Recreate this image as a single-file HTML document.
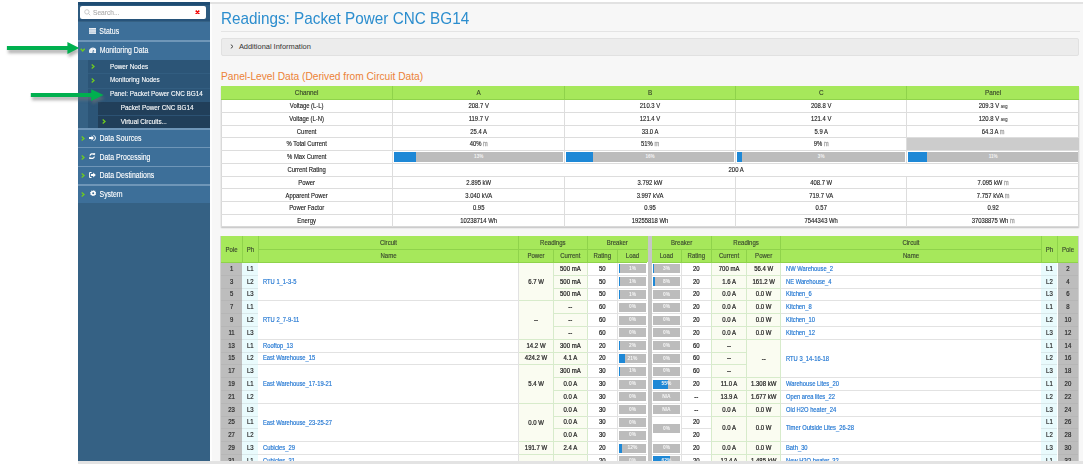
<!DOCTYPE html>
<html><head><meta charset="utf-8"><style>
html,body{margin:0;padding:0;background:#fff;width:1083px;height:464px;overflow:hidden;}
body{position:relative;font-family:"Liberation Sans",sans-serif;}
.a{position:absolute;}
.t{position:absolute;white-space:nowrap;overflow:visible;}
.sm{font-size:0.72em;color:#777;}
.sg{font-size:0.95em;color:#a0a0a0;-webkit-text-stroke:0.25px #a0a0a0;}
</style></head><body>
<div class="a" style="left:78.00px;top:2.00px;width:1005.00px;height:1.60px;background:#e2e2e2;"></div>
<div class="a" style="left:210.00px;top:3.60px;width:873.00px;height:457.40px;background:#f7f7f7;"></div>
<div class="a" style="left:210.00px;top:3.60px;width:2.20px;height:457.40px;background:#fdfdfd;"></div>
<div class="a" style="left:78.00px;top:461.00px;width:1005.00px;height:3.00px;background:#e3e3e3;"></div>
<div class="a" style="left:78.00px;top:2.00px;width:132.00px;height:459.00px;background:#356184;"></div>
<div class="a" style="left:78.00px;top:2.00px;width:132.00px;height:19.00px;background:#2d5a7f;"></div>
<div class="a" style="left:78.00px;top:2.00px;width:132.00px;height:2.50px;background:#1f4c73;"></div>
<div class="a" style="left:78.00px;top:19.20px;width:132.00px;height:2.30px;background:#27537a;"></div>
<div class="a" style="left:80px;top:5.7px;width:126px;height:13.5px;background:#fff;border-radius:2px;"></div>
<svg class="a" style="left:83.5px;top:9.3px" width="7" height="7" viewBox="0 0 7 7"><circle cx="2.9" cy="2.9" r="2.2" fill="none" stroke="#c4c4c4" stroke-width="0.9"/><line x1="4.5" y1="4.5" x2="6.3" y2="6.3" stroke="#c4c4c4" stroke-width="0.9"/></svg>
<div class="t" style="left:93.00px;top:6.00px;width:47.00px;height:13.00px;line-height:13.00px;font-size:6.6px;font-weight:normal;color:#adadad;text-align:left;-webkit-text-stroke:0.12px #adadad;transform:scale(1,1.1);transform-origin:0 50%;">Search...</div>
<svg class="a" style="left:195.2px;top:9.8px" width="5" height="4.6" viewBox="0 0 5 4.6"><path d="M0.7 0.6 L4.3 4.0 M4.3 0.6 L0.7 4.0" stroke="#f20000" stroke-width="1.5"/></svg>
<div class="a" style="left:78.00px;top:21.50px;width:132.00px;height:18.70px;background:#3d6f99;"></div>
<div class="a" style="left:78.00px;top:40.20px;width:132.00px;height:1.70px;background:#6f96b8;"></div>
<svg class="a" style="left:88.8px;top:28.1px" width="7.4" height="5.9" viewBox="0 0 7.4 5.9"><rect x="0" y="0" width="7.4" height="5.9" fill="#eef2f6"/><path d="M0 1.5H7.4M0 2.95H7.4M0 4.4H7.4" stroke="#93afc8" stroke-width="0.55"/><path d="M1.9 0V5.9" stroke="#c8d6e2" stroke-width="0.5"/></svg>
<div class="t" style="left:99.30px;top:22.50px;width:60.70px;height:18.60px;line-height:18.60px;font-size:7.0px;font-weight:normal;color:#fff;text-align:left;-webkit-text-stroke:0.1px #fff;transform:scale(1,1.18);transform-origin:0 50%;">Status</div>
<div class="a" style="left:78.00px;top:41.90px;width:132.00px;height:18.10px;background:#3d6f99;"></div>
<svg class="a" style="left:79.6px;top:48.2px" width="5.4" height="4" viewBox="0 0 5.4 4"><path d="M0.7 0.7 L2.7 2.9 L4.7 0.7" fill="none" stroke="#6fcc1e" stroke-width="1.4"/></svg>
<svg class="a" style="left:88.6px;top:46.7px" width="7.8" height="6.4" viewBox="0 0 7.8 6.4"><path d="M0.5 6.2 A3.9 3.9 0 1 1 7.3 6.2 Z" fill="#f3f6f9"/><path d="M3.9 5.9 L4.4 3.0" stroke="#3d6f99" stroke-width="1.0"/><circle cx="1.9" cy="3.9" r="0.5" fill="#9fb6cc"/><circle cx="5.9" cy="3.9" r="0.5" fill="#9fb6cc"/><circle cx="3.9" cy="1.8" r="0.5" fill="#9fb6cc"/></svg>
<div class="t" style="left:99.70px;top:42.10px;width:70.30px;height:18.30px;line-height:18.30px;font-size:6.9px;font-weight:normal;color:#fff;text-align:left;-webkit-text-stroke:0.1px #fff;transform:scale(1,1.18);transform-origin:0 50%;">Monitoring Data</div>
<div class="a" style="left:88.00px;top:60.00px;width:122.00px;height:67.80px;background:#2c5577;"></div>
<div class="a" style="left:88.00px;top:73.30px;width:122.00px;height:0.80px;background:#325d80;"></div>
<div class="a" style="left:88.00px;top:87.50px;width:122.00px;height:0.80px;background:#325d80;"></div>
<svg class="a" style="left:91.3px;top:64.3px" width="4" height="5" viewBox="0 0 4 5"><path d="M0.7 0.6 L3 2.5 L0.7 4.4" fill="none" stroke="#6fcc1e" stroke-width="1.35"/></svg>
<div class="t" style="left:110.00px;top:59.50px;width:90.00px;height:13.30px;line-height:13.30px;font-size:6.35px;font-weight:normal;color:#fff;text-align:left;-webkit-text-stroke:0.1px #fff;transform:scale(1,1.18);transform-origin:0 50%;">Power Nodes</div>
<svg class="a" style="left:91.3px;top:78.3px" width="4" height="5" viewBox="0 0 4 5"><path d="M0.7 0.6 L3 2.5 L0.7 4.4" fill="none" stroke="#6fcc1e" stroke-width="1.35"/></svg>
<div class="t" style="left:110.00px;top:72.60px;width:90.00px;height:13.40px;line-height:13.40px;font-size:6.35px;font-weight:normal;color:#fff;text-align:left;-webkit-text-stroke:0.1px #fff;transform:scale(1,1.18);transform-origin:0 50%;">Monitoring Nodes</div>
<div class="t" style="left:110.00px;top:86.80px;width:100.00px;height:13.20px;line-height:13.20px;font-size:6.39px;font-weight:normal;color:#fff;text-align:left;-webkit-text-stroke:0.1px #fff;transform:scale(1,1.18);transform-origin:0 50%;">Panel: Packet Power CNC BG14</div>
<div class="a" style="left:98.00px;top:101.50px;width:112.00px;height:26.30px;background:#213f5a;"></div>
<div class="a" style="left:98.00px;top:114.90px;width:112.00px;height:0.90px;background:#2c5273;"></div>
<div class="t" style="left:120.70px;top:101.00px;width:84.30px;height:13.30px;line-height:13.30px;font-size:6.37px;font-weight:normal;color:#fff;text-align:left;-webkit-text-stroke:0.1px #fff;transform:scale(1,1.18);transform-origin:0 50%;">Packet Power CNC BG14</div>
<svg class="a" style="left:102px;top:119.3px" width="4" height="5" viewBox="0 0 4 5"><path d="M0.7 0.6 L3 2.5 L0.7 4.4" fill="none" stroke="#6fcc1e" stroke-width="1.35"/></svg>
<div class="t" style="left:120.70px;top:116.10px;width:84.30px;height:12.70px;line-height:12.70px;font-size:6.37px;font-weight:normal;color:#fff;text-align:left;-webkit-text-stroke:0.1px #fff;transform:scale(1,1.18);transform-origin:0 50%;">Virtual Circuits...</div>
<div class="a" style="left:78.00px;top:127.80px;width:132.00px;height:1.80px;background:#6f96b8;"></div>
<div class="a" style="left:78.00px;top:129.60px;width:132.00px;height:17.50px;background:#3d6f99;"></div>
<div class="a" style="left:78.00px;top:146.90px;width:132.00px;height:1.50px;background:#6f96b8;"></div>
<svg class="a" style="left:81px;top:135.85px" width="4" height="5" viewBox="0 0 4 5"><path d="M0.7 0.6 L3 2.5 L0.7 4.4" fill="none" stroke="#6fcc1e" stroke-width="1.35"/></svg>
<div class="t" style="left:99.50px;top:130.10px;width:100.50px;height:17.50px;line-height:17.50px;font-size:6.95px;font-weight:normal;color:#fff;text-align:left;-webkit-text-stroke:0.1px #fff;transform:scale(1,1.18);transform-origin:0 50%;">Data Sources</div>
<div class="a" style="left:78.00px;top:148.20px;width:132.00px;height:17.70px;background:#3d6f99;"></div>
<div class="a" style="left:78.00px;top:165.70px;width:132.00px;height:1.50px;background:#6f96b8;"></div>
<svg class="a" style="left:81px;top:154.55px" width="4" height="5" viewBox="0 0 4 5"><path d="M0.7 0.6 L3 2.5 L0.7 4.4" fill="none" stroke="#6fcc1e" stroke-width="1.35"/></svg>
<div class="t" style="left:99.50px;top:148.50px;width:100.50px;height:17.70px;line-height:17.70px;font-size:6.95px;font-weight:normal;color:#fff;text-align:left;-webkit-text-stroke:0.1px #fff;transform:scale(1,1.18);transform-origin:0 50%;">Data Processing</div>
<div class="a" style="left:78.00px;top:167.00px;width:132.00px;height:17.40px;background:#3d6f99;"></div>
<div class="a" style="left:78.00px;top:184.20px;width:132.00px;height:1.50px;background:#6f96b8;"></div>
<svg class="a" style="left:81px;top:173.2px" width="4" height="5" viewBox="0 0 4 5"><path d="M0.7 0.6 L3 2.5 L0.7 4.4" fill="none" stroke="#6fcc1e" stroke-width="1.35"/></svg>
<div class="t" style="left:99.50px;top:166.50px;width:100.50px;height:17.40px;line-height:17.40px;font-size:6.95px;font-weight:normal;color:#fff;text-align:left;-webkit-text-stroke:0.1px #fff;transform:scale(1,1.18);transform-origin:0 50%;">Data Destinations</div>
<div class="a" style="left:78.00px;top:185.50px;width:132.00px;height:17.40px;background:#3d6f99;"></div>
<svg class="a" style="left:81px;top:191.7px" width="4" height="5" viewBox="0 0 4 5"><path d="M0.7 0.6 L3 2.5 L0.7 4.4" fill="none" stroke="#6fcc1e" stroke-width="1.35"/></svg>
<div class="t" style="left:99.50px;top:185.80px;width:100.50px;height:17.40px;line-height:17.40px;font-size:6.95px;font-weight:normal;color:#fff;text-align:left;-webkit-text-stroke:0.1px #fff;transform:scale(1,1.18);transform-origin:0 50%;">System</div>
<svg class="a" style="left:88.9px;top:134.8px" width="7" height="6" viewBox="0 0 7 6"><path d="M0 2.1H2.6V0.5L4.9 3L2.6 5.5V3.9H0Z" fill="#fff"/><path d="M4.3 0.5 Q6.5 0.7 6.5 3 Q6.5 5.3 4.3 5.5" fill="none" stroke="#fff" stroke-width="0.9"/></svg>
<svg class="a" style="left:89.2px;top:153.2px" width="6.4" height="6.2" viewBox="0 0 6.4 6.2"><path d="M1.0 2.7 A2.3 2.3 0 0 1 5.0 1.6" fill="none" stroke="#fff" stroke-width="1.3"/><path d="M5.4 3.5 A2.3 2.3 0 0 1 1.4 4.6" fill="none" stroke="#fff" stroke-width="1.3"/><path d="M3.9 0.1 L6.2 0.2 L6.0 2.6Z M2.5 6.1 L0.2 6.0 L0.4 3.6Z" fill="#fff"/></svg>
<svg class="a" style="left:89.0px;top:172.2px" width="7" height="6" viewBox="0 0 7 6"><path d="M2.6 0.5H0.6V5.5H2.6" fill="none" stroke="#fff" stroke-width="1.0"/><path d="M2.0 2.1H4.2V0.5L6.8 3L4.2 5.5V3.9H2.0Z" fill="#fff"/></svg>
<svg class="a" style="left:89.9px;top:190.3px" width="6.4" height="6.4" viewBox="0 0 6.4 6.4"><path d="M3.2 0 L3.9 0.9 L5.2 0.6 L5.3 1.9 L6.4 2.5 L5.7 3.6 L6.1 4.8 L4.8 5.1 L4.1 6.2 L3.2 5.5 L2.0 6.1 L1.5 4.9 L0.2 4.6 L0.6 3.4 L0 2.3 L1.2 1.8 L1.3 0.5 L2.6 0.9Z" fill="#fff"/><circle cx="3.2" cy="3.2" r="1.0" fill="#3d6f99"/></svg>
<div class="t" style="left:221.00px;top:7.70px;width:379.00px;height:20.00px;line-height:20.00px;font-size:16.4px;font-weight:normal;color:#2b8dce;text-align:left;transform:scale(0.933,1);transform-origin:0 50%;">Readings: Packet Power CNC BG14</div>
<div class="a" style="left:220.50px;top:31.30px;width:859.00px;height:1.10px;background:#e4e4e4;"></div>
<div class="a" style="left:220.5px;top:37.8px;width:858.5px;height:17.8px;box-sizing:border-box;background:#ececec;border-radius:2px;border:0.8px solid #e1e1e1"></div>
<svg class="a" style="left:230.3px;top:43.5px" width="4" height="5" viewBox="0 0 4 5"><path d="M0.8 0.6 L3 2.5 L0.8 4.4" fill="none" stroke="#444" stroke-width="1"/></svg>
<div class="t" style="left:238.90px;top:38.00px;width:161.10px;height:17.60px;line-height:17.60px;font-size:7.45px;font-weight:normal;color:#333;text-align:left;">Additional Information</div>
<div class="t" style="left:221.00px;top:69.00px;width:379.00px;height:16.00px;line-height:16.00px;font-size:10.2px;font-weight:normal;color:#ec8236;text-align:left;">Panel-Level Data (Derived from Circuit Data)</div>
<div class="a" style="left:220.50px;top:86.20px;width:858.90px;height:140.50px;background:#fff;box-sizing:border-box;border:0.8px solid #d9d9d9;box-shadow:0 0.6px 1.2px rgba(0,0,0,0.22)"></div>
<div class="a" style="left:220.50px;top:86.20px;width:858.90px;height:13.30px;background:#a6e85b;"></div>
<div class="a" style="left:220.50px;top:98.50px;width:858.90px;height:1.00px;background:#8fd34b;"></div>
<div class="a" style="left:392.40px;top:86.20px;width:1.00px;height:13.30px;background:#8fd34b;"></div>
<div class="a" style="left:564.00px;top:86.20px;width:1.00px;height:13.30px;background:#8fd34b;"></div>
<div class="a" style="left:735.00px;top:86.20px;width:1.00px;height:13.30px;background:#8fd34b;"></div>
<div class="a" style="left:906.40px;top:86.20px;width:1.00px;height:13.30px;background:#8fd34b;"></div>
<div class="t" style="left:220.50px;top:85.80px;width:172.40px;height:13.30px;line-height:13.30px;font-size:6.36px;font-weight:normal;color:#3a4a2a;text-align:center;-webkit-text-stroke:0.15px #3a4a2a;transform:scale(1,1.18);transform-origin:50% 50%;">Channel</div>
<div class="t" style="left:392.90px;top:85.80px;width:171.60px;height:13.30px;line-height:13.30px;font-size:6.36px;font-weight:normal;color:#3a4a2a;text-align:center;-webkit-text-stroke:0.15px #3a4a2a;transform:scale(1,1.18);transform-origin:50% 50%;">A</div>
<div class="t" style="left:564.50px;top:85.80px;width:171.00px;height:13.30px;line-height:13.30px;font-size:6.36px;font-weight:normal;color:#3a4a2a;text-align:center;-webkit-text-stroke:0.15px #3a4a2a;transform:scale(1,1.18);transform-origin:50% 50%;">B</div>
<div class="t" style="left:735.50px;top:85.80px;width:171.40px;height:13.30px;line-height:13.30px;font-size:6.36px;font-weight:normal;color:#3a4a2a;text-align:center;-webkit-text-stroke:0.15px #3a4a2a;transform:scale(1,1.18);transform-origin:50% 50%;">C</div>
<div class="t" style="left:906.90px;top:85.80px;width:172.50px;height:13.30px;line-height:13.30px;font-size:6.36px;font-weight:normal;color:#3a4a2a;text-align:center;-webkit-text-stroke:0.15px #3a4a2a;transform:scale(1,1.18);transform-origin:50% 50%;">Panel</div>
<div class="a" style="left:392.40px;top:99.50px;width:1.00px;height:12.76px;background:#dddddd;"></div>
<div class="a" style="left:564.00px;top:99.50px;width:1.00px;height:12.76px;background:#dddddd;"></div>
<div class="a" style="left:735.00px;top:99.50px;width:1.00px;height:12.76px;background:#dddddd;"></div>
<div class="a" style="left:906.40px;top:99.50px;width:1.00px;height:12.76px;background:#dddddd;"></div>
<div class="t" style="left:220.50px;top:100.20px;width:172.40px;height:12.76px;line-height:12.76px;font-size:5.9px;font-weight:normal;color:#222;text-align:center;-webkit-text-stroke:0.12px #222;transform:scale(1,1.18);transform-origin:50% 50%;">Voltage (L-L)</div>
<div class="t" style="left:392.90px;top:100.20px;width:171.60px;height:12.76px;line-height:12.76px;font-size:5.9px;font-weight:normal;color:#222;text-align:center;-webkit-text-stroke:0.12px #222;transform:scale(1,1.18);transform-origin:50% 50%;">208.7 V</div>
<div class="t" style="left:564.50px;top:100.20px;width:171.00px;height:12.76px;line-height:12.76px;font-size:5.9px;font-weight:normal;color:#222;text-align:center;-webkit-text-stroke:0.12px #222;transform:scale(1,1.18);transform-origin:50% 50%;">210.3 V</div>
<div class="t" style="left:735.50px;top:100.20px;width:171.40px;height:12.76px;line-height:12.76px;font-size:5.9px;font-weight:normal;color:#222;text-align:center;-webkit-text-stroke:0.12px #222;transform:scale(1,1.18);transform-origin:50% 50%;">208.8 V</div>
<div class="t" style="left:906.90px;top:100.20px;width:172.50px;height:12.76px;line-height:12.76px;font-size:5.9px;font-weight:normal;color:#222;text-align:center;-webkit-text-stroke:0.12px #222;transform:scale(1,1.18);transform-origin:50% 50%;">209.3 V <span class="sm">avg</span></div>
<div class="a" style="left:220.50px;top:111.76px;width:858.90px;height:1.10px;background:#dddddd;"></div>
<div class="a" style="left:392.40px;top:112.26px;width:1.00px;height:12.76px;background:#dddddd;"></div>
<div class="a" style="left:564.00px;top:112.26px;width:1.00px;height:12.76px;background:#dddddd;"></div>
<div class="a" style="left:735.00px;top:112.26px;width:1.00px;height:12.76px;background:#dddddd;"></div>
<div class="a" style="left:906.40px;top:112.26px;width:1.00px;height:12.76px;background:#dddddd;"></div>
<div class="t" style="left:220.50px;top:112.96px;width:172.40px;height:12.76px;line-height:12.76px;font-size:5.9px;font-weight:normal;color:#222;text-align:center;-webkit-text-stroke:0.12px #222;transform:scale(1,1.18);transform-origin:50% 50%;">Voltage (L-N)</div>
<div class="t" style="left:392.90px;top:112.96px;width:171.60px;height:12.76px;line-height:12.76px;font-size:5.9px;font-weight:normal;color:#222;text-align:center;-webkit-text-stroke:0.12px #222;transform:scale(1,1.18);transform-origin:50% 50%;">119.7 V</div>
<div class="t" style="left:564.50px;top:112.96px;width:171.00px;height:12.76px;line-height:12.76px;font-size:5.9px;font-weight:normal;color:#222;text-align:center;-webkit-text-stroke:0.12px #222;transform:scale(1,1.18);transform-origin:50% 50%;">121.4 V</div>
<div class="t" style="left:735.50px;top:112.96px;width:171.40px;height:12.76px;line-height:12.76px;font-size:5.9px;font-weight:normal;color:#222;text-align:center;-webkit-text-stroke:0.12px #222;transform:scale(1,1.18);transform-origin:50% 50%;">121.4 V</div>
<div class="t" style="left:906.90px;top:112.96px;width:172.50px;height:12.76px;line-height:12.76px;font-size:5.9px;font-weight:normal;color:#222;text-align:center;-webkit-text-stroke:0.12px #222;transform:scale(1,1.18);transform-origin:50% 50%;">120.8 V <span class="sm">avg</span></div>
<div class="a" style="left:220.50px;top:124.52px;width:858.90px;height:1.10px;background:#dddddd;"></div>
<div class="a" style="left:392.40px;top:125.02px;width:1.00px;height:12.76px;background:#dddddd;"></div>
<div class="a" style="left:564.00px;top:125.02px;width:1.00px;height:12.76px;background:#dddddd;"></div>
<div class="a" style="left:735.00px;top:125.02px;width:1.00px;height:12.76px;background:#dddddd;"></div>
<div class="a" style="left:906.40px;top:125.02px;width:1.00px;height:12.76px;background:#dddddd;"></div>
<div class="t" style="left:220.50px;top:125.72px;width:172.40px;height:12.76px;line-height:12.76px;font-size:5.9px;font-weight:normal;color:#222;text-align:center;-webkit-text-stroke:0.12px #222;transform:scale(1,1.18);transform-origin:50% 50%;">Current</div>
<div class="t" style="left:392.90px;top:125.72px;width:171.60px;height:12.76px;line-height:12.76px;font-size:5.9px;font-weight:normal;color:#222;text-align:center;-webkit-text-stroke:0.12px #222;transform:scale(1,1.18);transform-origin:50% 50%;">25.4 A</div>
<div class="t" style="left:564.50px;top:125.72px;width:171.00px;height:12.76px;line-height:12.76px;font-size:5.9px;font-weight:normal;color:#222;text-align:center;-webkit-text-stroke:0.12px #222;transform:scale(1,1.18);transform-origin:50% 50%;">33.0 A</div>
<div class="t" style="left:735.50px;top:125.72px;width:171.40px;height:12.76px;line-height:12.76px;font-size:5.9px;font-weight:normal;color:#222;text-align:center;-webkit-text-stroke:0.12px #222;transform:scale(1,1.18);transform-origin:50% 50%;">5.9 A</div>
<div class="t" style="left:906.90px;top:125.72px;width:172.50px;height:12.76px;line-height:12.76px;font-size:5.9px;font-weight:normal;color:#222;text-align:center;-webkit-text-stroke:0.12px #222;transform:scale(1,1.18);transform-origin:50% 50%;">64.3 A <span class="sg">m</span></div>
<div class="a" style="left:220.50px;top:137.28px;width:858.90px;height:1.10px;background:#dddddd;"></div>
<div class="a" style="left:392.40px;top:137.78px;width:1.00px;height:12.76px;background:#dddddd;"></div>
<div class="a" style="left:564.00px;top:137.78px;width:1.00px;height:12.76px;background:#dddddd;"></div>
<div class="a" style="left:735.00px;top:137.78px;width:1.00px;height:12.76px;background:#dddddd;"></div>
<div class="a" style="left:906.40px;top:137.78px;width:1.00px;height:12.76px;background:#dddddd;"></div>
<div class="t" style="left:220.50px;top:138.48px;width:172.40px;height:12.76px;line-height:12.76px;font-size:5.9px;font-weight:normal;color:#222;text-align:center;-webkit-text-stroke:0.12px #222;transform:scale(1,1.18);transform-origin:50% 50%;">% Total Current</div>
<div class="t" style="left:392.90px;top:138.48px;width:171.60px;height:12.76px;line-height:12.76px;font-size:5.9px;font-weight:normal;color:#222;text-align:center;-webkit-text-stroke:0.12px #222;transform:scale(1,1.18);transform-origin:50% 50%;">40% <span class="sg">m</span></div>
<div class="t" style="left:564.50px;top:138.48px;width:171.00px;height:12.76px;line-height:12.76px;font-size:5.9px;font-weight:normal;color:#222;text-align:center;-webkit-text-stroke:0.12px #222;transform:scale(1,1.18);transform-origin:50% 50%;">51% <span class="sg">m</span></div>
<div class="t" style="left:735.50px;top:138.48px;width:171.40px;height:12.76px;line-height:12.76px;font-size:5.9px;font-weight:normal;color:#222;text-align:center;-webkit-text-stroke:0.12px #222;transform:scale(1,1.18);transform-origin:50% 50%;">9% <span class="sg">m</span></div>
<div class="a" style="left:907.40px;top:138.38px;width:171.50px;height:11.66px;background:#cccccc;"></div>
<div class="a" style="left:220.50px;top:150.04px;width:858.90px;height:1.10px;background:#dddddd;"></div>
<div class="a" style="left:392.40px;top:150.54px;width:1.00px;height:12.76px;background:#dddddd;"></div>
<div class="a" style="left:564.00px;top:150.54px;width:1.00px;height:12.76px;background:#dddddd;"></div>
<div class="a" style="left:735.00px;top:150.54px;width:1.00px;height:12.76px;background:#dddddd;"></div>
<div class="a" style="left:906.40px;top:150.54px;width:1.00px;height:12.76px;background:#dddddd;"></div>
<div class="t" style="left:220.50px;top:151.24px;width:172.40px;height:12.76px;line-height:12.76px;font-size:5.9px;font-weight:normal;color:#222;text-align:center;-webkit-text-stroke:0.12px #222;transform:scale(1,1.18);transform-origin:50% 50%;">% Max Current</div>
<div class="a" style="left:394.30px;top:152.04px;width:168.80px;height:9.56px;background:#bcbcbc;"></div>
<div class="a" style="left:394.30px;top:152.04px;width:21.94px;height:9.56px;background:#1e88d6;"></div>
<div class="t" style="left:394.30px;top:152.04px;width:168.80px;height:9.56px;line-height:9.56px;font-size:4.6px;font-weight:normal;color:#f4f4f4;text-align:center;font-weight:bold;">13%</div>
<div class="a" style="left:565.90px;top:152.04px;width:168.20px;height:9.56px;background:#bcbcbc;"></div>
<div class="a" style="left:565.90px;top:152.04px;width:26.91px;height:9.56px;background:#1e88d6;"></div>
<div class="t" style="left:565.90px;top:152.04px;width:168.20px;height:9.56px;line-height:9.56px;font-size:4.6px;font-weight:normal;color:#f4f4f4;text-align:center;font-weight:bold;">16%</div>
<div class="a" style="left:736.90px;top:152.04px;width:168.60px;height:9.56px;background:#bcbcbc;"></div>
<div class="a" style="left:736.90px;top:152.04px;width:5.06px;height:9.56px;background:#1e88d6;"></div>
<div class="t" style="left:736.90px;top:152.04px;width:168.60px;height:9.56px;line-height:9.56px;font-size:4.6px;font-weight:normal;color:#f4f4f4;text-align:center;font-weight:bold;">3%</div>
<div class="a" style="left:908.30px;top:152.04px;width:169.70px;height:9.56px;background:#bcbcbc;"></div>
<div class="a" style="left:908.30px;top:152.04px;width:18.67px;height:9.56px;background:#1e88d6;"></div>
<div class="t" style="left:908.30px;top:152.04px;width:169.70px;height:9.56px;line-height:9.56px;font-size:4.6px;font-weight:normal;color:#f4f4f4;text-align:center;font-weight:bold;">11%</div>
<div class="a" style="left:220.50px;top:162.80px;width:858.90px;height:1.10px;background:#dddddd;"></div>
<div class="a" style="left:392.40px;top:163.30px;width:1.00px;height:12.76px;background:#dddddd;"></div>
<div class="t" style="left:220.50px;top:164.00px;width:172.40px;height:12.76px;line-height:12.76px;font-size:5.9px;font-weight:normal;color:#222;text-align:center;-webkit-text-stroke:0.12px #222;transform:scale(1,1.18);transform-origin:50% 50%;">Current Rating</div>
<div class="t" style="left:392.90px;top:164.00px;width:686.50px;height:12.76px;line-height:12.76px;font-size:5.9px;font-weight:normal;color:#222;text-align:center;-webkit-text-stroke:0.12px #222;transform:scale(1,1.18);transform-origin:50% 50%;">200 A</div>
<div class="a" style="left:220.50px;top:175.56px;width:858.90px;height:1.10px;background:#dddddd;"></div>
<div class="a" style="left:392.40px;top:176.06px;width:1.00px;height:12.76px;background:#dddddd;"></div>
<div class="a" style="left:564.00px;top:176.06px;width:1.00px;height:12.76px;background:#dddddd;"></div>
<div class="a" style="left:735.00px;top:176.06px;width:1.00px;height:12.76px;background:#dddddd;"></div>
<div class="a" style="left:906.40px;top:176.06px;width:1.00px;height:12.76px;background:#dddddd;"></div>
<div class="t" style="left:220.50px;top:176.76px;width:172.40px;height:12.76px;line-height:12.76px;font-size:5.9px;font-weight:normal;color:#222;text-align:center;-webkit-text-stroke:0.12px #222;transform:scale(1,1.18);transform-origin:50% 50%;">Power</div>
<div class="t" style="left:392.90px;top:176.76px;width:171.60px;height:12.76px;line-height:12.76px;font-size:5.9px;font-weight:normal;color:#222;text-align:center;-webkit-text-stroke:0.12px #222;transform:scale(1,1.18);transform-origin:50% 50%;">2.895 kW</div>
<div class="t" style="left:564.50px;top:176.76px;width:171.00px;height:12.76px;line-height:12.76px;font-size:5.9px;font-weight:normal;color:#222;text-align:center;-webkit-text-stroke:0.12px #222;transform:scale(1,1.18);transform-origin:50% 50%;">3.792 kW</div>
<div class="t" style="left:735.50px;top:176.76px;width:171.40px;height:12.76px;line-height:12.76px;font-size:5.9px;font-weight:normal;color:#222;text-align:center;-webkit-text-stroke:0.12px #222;transform:scale(1,1.18);transform-origin:50% 50%;">408.7 W</div>
<div class="t" style="left:906.90px;top:176.76px;width:172.50px;height:12.76px;line-height:12.76px;font-size:5.9px;font-weight:normal;color:#222;text-align:center;-webkit-text-stroke:0.12px #222;transform:scale(1,1.18);transform-origin:50% 50%;">7.095 kW <span class="sg">m</span></div>
<div class="a" style="left:220.50px;top:188.32px;width:858.90px;height:1.10px;background:#dddddd;"></div>
<div class="a" style="left:392.40px;top:188.82px;width:1.00px;height:12.76px;background:#dddddd;"></div>
<div class="a" style="left:564.00px;top:188.82px;width:1.00px;height:12.76px;background:#dddddd;"></div>
<div class="a" style="left:735.00px;top:188.82px;width:1.00px;height:12.76px;background:#dddddd;"></div>
<div class="a" style="left:906.40px;top:188.82px;width:1.00px;height:12.76px;background:#dddddd;"></div>
<div class="t" style="left:220.50px;top:189.52px;width:172.40px;height:12.76px;line-height:12.76px;font-size:5.9px;font-weight:normal;color:#222;text-align:center;-webkit-text-stroke:0.12px #222;transform:scale(1,1.18);transform-origin:50% 50%;">Apparent Power</div>
<div class="t" style="left:392.90px;top:189.52px;width:171.60px;height:12.76px;line-height:12.76px;font-size:5.9px;font-weight:normal;color:#222;text-align:center;-webkit-text-stroke:0.12px #222;transform:scale(1,1.18);transform-origin:50% 50%;">3.040 kVA</div>
<div class="t" style="left:564.50px;top:189.52px;width:171.00px;height:12.76px;line-height:12.76px;font-size:5.9px;font-weight:normal;color:#222;text-align:center;-webkit-text-stroke:0.12px #222;transform:scale(1,1.18);transform-origin:50% 50%;">3.997 kVA</div>
<div class="t" style="left:735.50px;top:189.52px;width:171.40px;height:12.76px;line-height:12.76px;font-size:5.9px;font-weight:normal;color:#222;text-align:center;-webkit-text-stroke:0.12px #222;transform:scale(1,1.18);transform-origin:50% 50%;">719.7 VA</div>
<div class="t" style="left:906.90px;top:189.52px;width:172.50px;height:12.76px;line-height:12.76px;font-size:5.9px;font-weight:normal;color:#222;text-align:center;-webkit-text-stroke:0.12px #222;transform:scale(1,1.18);transform-origin:50% 50%;">7.757 kVA <span class="sg">m</span></div>
<div class="a" style="left:220.50px;top:201.08px;width:858.90px;height:1.10px;background:#dddddd;"></div>
<div class="a" style="left:392.40px;top:201.58px;width:1.00px;height:12.76px;background:#dddddd;"></div>
<div class="a" style="left:564.00px;top:201.58px;width:1.00px;height:12.76px;background:#dddddd;"></div>
<div class="a" style="left:735.00px;top:201.58px;width:1.00px;height:12.76px;background:#dddddd;"></div>
<div class="a" style="left:906.40px;top:201.58px;width:1.00px;height:12.76px;background:#dddddd;"></div>
<div class="t" style="left:220.50px;top:202.28px;width:172.40px;height:12.76px;line-height:12.76px;font-size:5.9px;font-weight:normal;color:#222;text-align:center;-webkit-text-stroke:0.12px #222;transform:scale(1,1.18);transform-origin:50% 50%;">Power Factor</div>
<div class="t" style="left:392.90px;top:202.28px;width:171.60px;height:12.76px;line-height:12.76px;font-size:5.9px;font-weight:normal;color:#222;text-align:center;-webkit-text-stroke:0.12px #222;transform:scale(1,1.18);transform-origin:50% 50%;">0.95</div>
<div class="t" style="left:564.50px;top:202.28px;width:171.00px;height:12.76px;line-height:12.76px;font-size:5.9px;font-weight:normal;color:#222;text-align:center;-webkit-text-stroke:0.12px #222;transform:scale(1,1.18);transform-origin:50% 50%;">0.95</div>
<div class="t" style="left:735.50px;top:202.28px;width:171.40px;height:12.76px;line-height:12.76px;font-size:5.9px;font-weight:normal;color:#222;text-align:center;-webkit-text-stroke:0.12px #222;transform:scale(1,1.18);transform-origin:50% 50%;">0.57</div>
<div class="t" style="left:906.90px;top:202.28px;width:172.50px;height:12.76px;line-height:12.76px;font-size:5.9px;font-weight:normal;color:#222;text-align:center;-webkit-text-stroke:0.12px #222;transform:scale(1,1.18);transform-origin:50% 50%;">0.92</div>
<div class="a" style="left:220.50px;top:213.84px;width:858.90px;height:1.10px;background:#dddddd;"></div>
<div class="a" style="left:392.40px;top:214.34px;width:1.00px;height:12.76px;background:#dddddd;"></div>
<div class="a" style="left:564.00px;top:214.34px;width:1.00px;height:12.76px;background:#dddddd;"></div>
<div class="a" style="left:735.00px;top:214.34px;width:1.00px;height:12.76px;background:#dddddd;"></div>
<div class="a" style="left:906.40px;top:214.34px;width:1.00px;height:12.76px;background:#dddddd;"></div>
<div class="t" style="left:220.50px;top:215.04px;width:172.40px;height:12.76px;line-height:12.76px;font-size:5.9px;font-weight:normal;color:#222;text-align:center;-webkit-text-stroke:0.12px #222;transform:scale(1,1.18);transform-origin:50% 50%;">Energy</div>
<div class="t" style="left:392.90px;top:215.04px;width:171.60px;height:12.76px;line-height:12.76px;font-size:5.9px;font-weight:normal;color:#222;text-align:center;-webkit-text-stroke:0.12px #222;transform:scale(1,1.18);transform-origin:50% 50%;">10238714 Wh</div>
<div class="t" style="left:564.50px;top:215.04px;width:171.00px;height:12.76px;line-height:12.76px;font-size:5.9px;font-weight:normal;color:#222;text-align:center;-webkit-text-stroke:0.12px #222;transform:scale(1,1.18);transform-origin:50% 50%;">19255818 Wh</div>
<div class="t" style="left:735.50px;top:215.04px;width:171.40px;height:12.76px;line-height:12.76px;font-size:5.9px;font-weight:normal;color:#222;text-align:center;-webkit-text-stroke:0.12px #222;transform:scale(1,1.18);transform-origin:50% 50%;">7544343 Wh</div>
<div class="t" style="left:906.90px;top:215.04px;width:172.50px;height:12.76px;line-height:12.76px;font-size:5.9px;font-weight:normal;color:#222;text-align:center;-webkit-text-stroke:0.12px #222;transform:scale(1,1.18);transform-origin:50% 50%;">37038875 Wh <span class="sg">m</span></div>
<div class="a" style="left:220.80px;top:236.10px;width:857.60px;height:224.90px;background:#ffffff;"></div>
<div class="a" style="left:220.80px;top:236.10px;width:857.60px;height:26.30px;background:#a6e85b;"></div>
<div class="a" style="left:647.50px;top:236.10px;width:4.20px;height:224.90px;background:#c6c6c6;"></div>
<div class="a" style="left:258.40px;top:248.70px;width:389.10px;height:1.00px;background:#8fd34b;"></div>
<div class="a" style="left:651.70px;top:248.70px;width:389.60px;height:1.00px;background:#8fd34b;"></div>
<div class="a" style="left:241.80px;top:236.10px;width:1.00px;height:26.30px;background:#8fd34b;"></div>
<div class="a" style="left:257.90px;top:236.10px;width:1.00px;height:26.30px;background:#8fd34b;"></div>
<div class="a" style="left:518.10px;top:236.10px;width:1.00px;height:26.30px;background:#8fd34b;"></div>
<div class="a" style="left:586.60px;top:236.10px;width:1.00px;height:26.30px;background:#8fd34b;"></div>
<div class="a" style="left:553.00px;top:249.20px;width:1.00px;height:13.20px;background:#8fd34b;"></div>
<div class="a" style="left:617.00px;top:249.20px;width:1.00px;height:13.20px;background:#8fd34b;"></div>
<div class="a" style="left:711.00px;top:236.10px;width:1.00px;height:26.30px;background:#8fd34b;"></div>
<div class="a" style="left:780.20px;top:236.10px;width:1.00px;height:26.30px;background:#8fd34b;"></div>
<div class="a" style="left:1040.80px;top:236.10px;width:1.00px;height:26.30px;background:#8fd34b;"></div>
<div class="a" style="left:1057.00px;top:236.10px;width:1.00px;height:26.30px;background:#8fd34b;"></div>
<div class="a" style="left:680.70px;top:249.20px;width:1.00px;height:13.20px;background:#8fd34b;"></div>
<div class="a" style="left:746.20px;top:249.20px;width:1.00px;height:13.20px;background:#8fd34b;"></div>
<div class="t" style="left:220.80px;top:236.90px;width:21.50px;height:26.30px;line-height:26.30px;font-size:6.05px;font-weight:normal;color:#3b4a2f;text-align:center;-webkit-text-stroke:0.15px #3b4a2f;transform:scale(1,1.18);transform-origin:50% 50%;">Pole</div>
<div class="t" style="left:242.30px;top:236.90px;width:16.10px;height:26.30px;line-height:26.30px;font-size:6.05px;font-weight:normal;color:#3b4a2f;text-align:center;-webkit-text-stroke:0.15px #3b4a2f;transform:scale(1,1.18);transform-origin:50% 50%;">Ph</div>
<div class="t" style="left:258.40px;top:236.90px;width:260.20px;height:13.10px;line-height:13.10px;font-size:6.05px;font-weight:normal;color:#3b4a2f;text-align:center;-webkit-text-stroke:0.15px #3b4a2f;transform:scale(1,1.18);transform-origin:50% 50%;">Circuit</div>
<div class="t" style="left:518.60px;top:236.90px;width:68.50px;height:13.10px;line-height:13.10px;font-size:6.05px;font-weight:normal;color:#3b4a2f;text-align:center;-webkit-text-stroke:0.15px #3b4a2f;transform:scale(1,1.18);transform-origin:50% 50%;">Readings</div>
<div class="t" style="left:587.10px;top:236.90px;width:60.40px;height:13.10px;line-height:13.10px;font-size:6.05px;font-weight:normal;color:#3b4a2f;text-align:center;-webkit-text-stroke:0.15px #3b4a2f;transform:scale(1,1.18);transform-origin:50% 50%;">Breaker</div>
<div class="t" style="left:258.40px;top:250.00px;width:260.20px;height:13.20px;line-height:13.20px;font-size:6.05px;font-weight:normal;color:#3b4a2f;text-align:center;-webkit-text-stroke:0.15px #3b4a2f;transform:scale(1,1.18);transform-origin:50% 50%;">Name</div>
<div class="t" style="left:518.60px;top:250.00px;width:34.90px;height:13.20px;line-height:13.20px;font-size:6.05px;font-weight:normal;color:#3b4a2f;text-align:center;-webkit-text-stroke:0.15px #3b4a2f;transform:scale(1,1.18);transform-origin:50% 50%;">Power</div>
<div class="t" style="left:553.50px;top:250.00px;width:33.60px;height:13.20px;line-height:13.20px;font-size:6.05px;font-weight:normal;color:#3b4a2f;text-align:center;-webkit-text-stroke:0.15px #3b4a2f;transform:scale(1,1.18);transform-origin:50% 50%;">Current</div>
<div class="t" style="left:587.10px;top:250.00px;width:30.40px;height:13.20px;line-height:13.20px;font-size:6.05px;font-weight:normal;color:#3b4a2f;text-align:center;-webkit-text-stroke:0.15px #3b4a2f;transform:scale(1,1.18);transform-origin:50% 50%;">Rating</div>
<div class="t" style="left:617.50px;top:250.00px;width:30.00px;height:13.20px;line-height:13.20px;font-size:6.05px;font-weight:normal;color:#3b4a2f;text-align:center;-webkit-text-stroke:0.15px #3b4a2f;transform:scale(1,1.18);transform-origin:50% 50%;">Load</div>
<div class="t" style="left:651.70px;top:236.90px;width:59.80px;height:13.10px;line-height:13.10px;font-size:6.05px;font-weight:normal;color:#3b4a2f;text-align:center;-webkit-text-stroke:0.15px #3b4a2f;transform:scale(1,1.18);transform-origin:50% 50%;">Breaker</div>
<div class="t" style="left:711.50px;top:236.90px;width:69.20px;height:13.10px;line-height:13.10px;font-size:6.05px;font-weight:normal;color:#3b4a2f;text-align:center;-webkit-text-stroke:0.15px #3b4a2f;transform:scale(1,1.18);transform-origin:50% 50%;">Readings</div>
<div class="t" style="left:780.70px;top:236.90px;width:260.60px;height:13.10px;line-height:13.10px;font-size:6.05px;font-weight:normal;color:#3b4a2f;text-align:center;-webkit-text-stroke:0.15px #3b4a2f;transform:scale(1,1.18);transform-origin:50% 50%;">Circuit</div>
<div class="t" style="left:651.70px;top:250.00px;width:29.50px;height:13.20px;line-height:13.20px;font-size:6.05px;font-weight:normal;color:#3b4a2f;text-align:center;-webkit-text-stroke:0.15px #3b4a2f;transform:scale(1,1.18);transform-origin:50% 50%;">Load</div>
<div class="t" style="left:681.20px;top:250.00px;width:30.30px;height:13.20px;line-height:13.20px;font-size:6.05px;font-weight:normal;color:#3b4a2f;text-align:center;-webkit-text-stroke:0.15px #3b4a2f;transform:scale(1,1.18);transform-origin:50% 50%;">Rating</div>
<div class="t" style="left:711.50px;top:250.00px;width:35.20px;height:13.20px;line-height:13.20px;font-size:6.05px;font-weight:normal;color:#3b4a2f;text-align:center;-webkit-text-stroke:0.15px #3b4a2f;transform:scale(1,1.18);transform-origin:50% 50%;">Current</div>
<div class="t" style="left:746.70px;top:250.00px;width:34.00px;height:13.20px;line-height:13.20px;font-size:6.05px;font-weight:normal;color:#3b4a2f;text-align:center;-webkit-text-stroke:0.15px #3b4a2f;transform:scale(1,1.18);transform-origin:50% 50%;">Power</div>
<div class="t" style="left:780.70px;top:250.00px;width:260.60px;height:13.20px;line-height:13.20px;font-size:6.05px;font-weight:normal;color:#3b4a2f;text-align:center;-webkit-text-stroke:0.15px #3b4a2f;transform:scale(1,1.18);transform-origin:50% 50%;">Name</div>
<div class="t" style="left:1041.30px;top:236.90px;width:16.20px;height:26.30px;line-height:26.30px;font-size:6.05px;font-weight:normal;color:#3b4a2f;text-align:center;-webkit-text-stroke:0.15px #3b4a2f;transform:scale(1,1.18);transform-origin:50% 50%;">Ph</div>
<div class="t" style="left:1057.50px;top:236.90px;width:20.90px;height:26.30px;line-height:26.30px;font-size:6.05px;font-weight:normal;color:#3b4a2f;text-align:center;-webkit-text-stroke:0.15px #3b4a2f;transform:scale(1,1.18);transform-origin:50% 50%;">Pole</div>
<div class="a" style="left:220.80px;top:262.40px;width:21.50px;height:12.80px;background:#bdbdbd;"></div>
<div class="a" style="left:242.30px;top:262.40px;width:16.10px;height:12.80px;background:#e9fbfd;"></div>
<div class="a" style="left:1057.50px;top:262.40px;width:20.90px;height:12.80px;background:#bdbdbd;"></div>
<div class="a" style="left:1041.30px;top:262.40px;width:16.20px;height:12.80px;background:#e9fbfd;"></div>
<div class="t" style="left:220.80px;top:262.70px;width:21.50px;height:12.80px;line-height:12.80px;font-size:6.0px;font-weight:normal;color:#2a2a2a;text-align:center;-webkit-text-stroke:0.18px #2a2a2a;transform:scale(1,1.18);transform-origin:50% 50%;">1</div>
<div class="t" style="left:242.30px;top:262.70px;width:16.10px;height:12.80px;line-height:12.80px;font-size:6.0px;font-weight:normal;color:#222;text-align:center;-webkit-text-stroke:0.15px #222;transform:scale(1,1.18);transform-origin:50% 50%;">L1</div>
<div class="t" style="left:1057.50px;top:262.70px;width:20.90px;height:12.80px;line-height:12.80px;font-size:6.0px;font-weight:normal;color:#2a2a2a;text-align:center;-webkit-text-stroke:0.18px #2a2a2a;transform:scale(1,1.18);transform-origin:50% 50%;">2</div>
<div class="t" style="left:1041.30px;top:262.70px;width:16.20px;height:12.80px;line-height:12.80px;font-size:6.0px;font-weight:normal;color:#222;text-align:center;-webkit-text-stroke:0.15px #222;transform:scale(1,1.18);transform-origin:50% 50%;">L1</div>
<div class="a" style="left:220.80px;top:275.20px;width:21.50px;height:12.80px;background:#bdbdbd;"></div>
<div class="a" style="left:242.30px;top:275.20px;width:16.10px;height:12.80px;background:#e9fbfd;"></div>
<div class="a" style="left:1057.50px;top:275.20px;width:20.90px;height:12.80px;background:#bdbdbd;"></div>
<div class="a" style="left:1041.30px;top:275.20px;width:16.20px;height:12.80px;background:#e9fbfd;"></div>
<div class="t" style="left:220.80px;top:275.50px;width:21.50px;height:12.80px;line-height:12.80px;font-size:6.0px;font-weight:normal;color:#2a2a2a;text-align:center;-webkit-text-stroke:0.18px #2a2a2a;transform:scale(1,1.18);transform-origin:50% 50%;">3</div>
<div class="t" style="left:242.30px;top:275.50px;width:16.10px;height:12.80px;line-height:12.80px;font-size:6.0px;font-weight:normal;color:#222;text-align:center;-webkit-text-stroke:0.15px #222;transform:scale(1,1.18);transform-origin:50% 50%;">L2</div>
<div class="t" style="left:1057.50px;top:275.50px;width:20.90px;height:12.80px;line-height:12.80px;font-size:6.0px;font-weight:normal;color:#2a2a2a;text-align:center;-webkit-text-stroke:0.18px #2a2a2a;transform:scale(1,1.18);transform-origin:50% 50%;">4</div>
<div class="t" style="left:1041.30px;top:275.50px;width:16.20px;height:12.80px;line-height:12.80px;font-size:6.0px;font-weight:normal;color:#222;text-align:center;-webkit-text-stroke:0.15px #222;transform:scale(1,1.18);transform-origin:50% 50%;">L2</div>
<div class="a" style="left:220.80px;top:274.70px;width:21.50px;height:1.00px;background:#b6b6b6;"></div>
<div class="a" style="left:242.30px;top:274.70px;width:16.10px;height:1.00px;background:#d9e8ea;"></div>
<div class="a" style="left:1041.30px;top:274.70px;width:16.20px;height:1.00px;background:#d9e8ea;"></div>
<div class="a" style="left:1057.50px;top:274.70px;width:20.90px;height:1.00px;background:#b6b6b6;"></div>
<div class="a" style="left:220.80px;top:288.00px;width:21.50px;height:12.80px;background:#bdbdbd;"></div>
<div class="a" style="left:242.30px;top:288.00px;width:16.10px;height:12.80px;background:#e9fbfd;"></div>
<div class="a" style="left:1057.50px;top:288.00px;width:20.90px;height:12.80px;background:#bdbdbd;"></div>
<div class="a" style="left:1041.30px;top:288.00px;width:16.20px;height:12.80px;background:#e9fbfd;"></div>
<div class="t" style="left:220.80px;top:288.30px;width:21.50px;height:12.80px;line-height:12.80px;font-size:6.0px;font-weight:normal;color:#2a2a2a;text-align:center;-webkit-text-stroke:0.18px #2a2a2a;transform:scale(1,1.18);transform-origin:50% 50%;">5</div>
<div class="t" style="left:242.30px;top:288.30px;width:16.10px;height:12.80px;line-height:12.80px;font-size:6.0px;font-weight:normal;color:#222;text-align:center;-webkit-text-stroke:0.15px #222;transform:scale(1,1.18);transform-origin:50% 50%;">L3</div>
<div class="t" style="left:1057.50px;top:288.30px;width:20.90px;height:12.80px;line-height:12.80px;font-size:6.0px;font-weight:normal;color:#2a2a2a;text-align:center;-webkit-text-stroke:0.18px #2a2a2a;transform:scale(1,1.18);transform-origin:50% 50%;">6</div>
<div class="t" style="left:1041.30px;top:288.30px;width:16.20px;height:12.80px;line-height:12.80px;font-size:6.0px;font-weight:normal;color:#222;text-align:center;-webkit-text-stroke:0.15px #222;transform:scale(1,1.18);transform-origin:50% 50%;">L3</div>
<div class="a" style="left:220.80px;top:287.50px;width:21.50px;height:1.00px;background:#b6b6b6;"></div>
<div class="a" style="left:242.30px;top:287.50px;width:16.10px;height:1.00px;background:#d9e8ea;"></div>
<div class="a" style="left:1041.30px;top:287.50px;width:16.20px;height:1.00px;background:#d9e8ea;"></div>
<div class="a" style="left:1057.50px;top:287.50px;width:20.90px;height:1.00px;background:#b6b6b6;"></div>
<div class="a" style="left:220.80px;top:300.80px;width:21.50px;height:12.80px;background:#bdbdbd;"></div>
<div class="a" style="left:242.30px;top:300.80px;width:16.10px;height:12.80px;background:#e9fbfd;"></div>
<div class="a" style="left:1057.50px;top:300.80px;width:20.90px;height:12.80px;background:#bdbdbd;"></div>
<div class="a" style="left:1041.30px;top:300.80px;width:16.20px;height:12.80px;background:#e9fbfd;"></div>
<div class="t" style="left:220.80px;top:301.10px;width:21.50px;height:12.80px;line-height:12.80px;font-size:6.0px;font-weight:normal;color:#2a2a2a;text-align:center;-webkit-text-stroke:0.18px #2a2a2a;transform:scale(1,1.18);transform-origin:50% 50%;">7</div>
<div class="t" style="left:242.30px;top:301.10px;width:16.10px;height:12.80px;line-height:12.80px;font-size:6.0px;font-weight:normal;color:#222;text-align:center;-webkit-text-stroke:0.15px #222;transform:scale(1,1.18);transform-origin:50% 50%;">L1</div>
<div class="t" style="left:1057.50px;top:301.10px;width:20.90px;height:12.80px;line-height:12.80px;font-size:6.0px;font-weight:normal;color:#2a2a2a;text-align:center;-webkit-text-stroke:0.18px #2a2a2a;transform:scale(1,1.18);transform-origin:50% 50%;">8</div>
<div class="t" style="left:1041.30px;top:301.10px;width:16.20px;height:12.80px;line-height:12.80px;font-size:6.0px;font-weight:normal;color:#222;text-align:center;-webkit-text-stroke:0.15px #222;transform:scale(1,1.18);transform-origin:50% 50%;">L1</div>
<div class="a" style="left:220.80px;top:300.30px;width:21.50px;height:1.00px;background:#b6b6b6;"></div>
<div class="a" style="left:242.30px;top:300.30px;width:16.10px;height:1.00px;background:#d9e8ea;"></div>
<div class="a" style="left:1041.30px;top:300.30px;width:16.20px;height:1.00px;background:#d9e8ea;"></div>
<div class="a" style="left:1057.50px;top:300.30px;width:20.90px;height:1.00px;background:#b6b6b6;"></div>
<div class="a" style="left:220.80px;top:313.60px;width:21.50px;height:12.80px;background:#bdbdbd;"></div>
<div class="a" style="left:242.30px;top:313.60px;width:16.10px;height:12.80px;background:#e9fbfd;"></div>
<div class="a" style="left:1057.50px;top:313.60px;width:20.90px;height:12.80px;background:#bdbdbd;"></div>
<div class="a" style="left:1041.30px;top:313.60px;width:16.20px;height:12.80px;background:#e9fbfd;"></div>
<div class="t" style="left:220.80px;top:313.90px;width:21.50px;height:12.80px;line-height:12.80px;font-size:6.0px;font-weight:normal;color:#2a2a2a;text-align:center;-webkit-text-stroke:0.18px #2a2a2a;transform:scale(1,1.18);transform-origin:50% 50%;">9</div>
<div class="t" style="left:242.30px;top:313.90px;width:16.10px;height:12.80px;line-height:12.80px;font-size:6.0px;font-weight:normal;color:#222;text-align:center;-webkit-text-stroke:0.15px #222;transform:scale(1,1.18);transform-origin:50% 50%;">L2</div>
<div class="t" style="left:1057.50px;top:313.90px;width:20.90px;height:12.80px;line-height:12.80px;font-size:6.0px;font-weight:normal;color:#2a2a2a;text-align:center;-webkit-text-stroke:0.18px #2a2a2a;transform:scale(1,1.18);transform-origin:50% 50%;">10</div>
<div class="t" style="left:1041.30px;top:313.90px;width:16.20px;height:12.80px;line-height:12.80px;font-size:6.0px;font-weight:normal;color:#222;text-align:center;-webkit-text-stroke:0.15px #222;transform:scale(1,1.18);transform-origin:50% 50%;">L2</div>
<div class="a" style="left:220.80px;top:313.10px;width:21.50px;height:1.00px;background:#b6b6b6;"></div>
<div class="a" style="left:242.30px;top:313.10px;width:16.10px;height:1.00px;background:#d9e8ea;"></div>
<div class="a" style="left:1041.30px;top:313.10px;width:16.20px;height:1.00px;background:#d9e8ea;"></div>
<div class="a" style="left:1057.50px;top:313.10px;width:20.90px;height:1.00px;background:#b6b6b6;"></div>
<div class="a" style="left:220.80px;top:326.40px;width:21.50px;height:12.80px;background:#bdbdbd;"></div>
<div class="a" style="left:242.30px;top:326.40px;width:16.10px;height:12.80px;background:#e9fbfd;"></div>
<div class="a" style="left:1057.50px;top:326.40px;width:20.90px;height:12.80px;background:#bdbdbd;"></div>
<div class="a" style="left:1041.30px;top:326.40px;width:16.20px;height:12.80px;background:#e9fbfd;"></div>
<div class="t" style="left:220.80px;top:326.70px;width:21.50px;height:12.80px;line-height:12.80px;font-size:6.0px;font-weight:normal;color:#2a2a2a;text-align:center;-webkit-text-stroke:0.18px #2a2a2a;transform:scale(1,1.18);transform-origin:50% 50%;">11</div>
<div class="t" style="left:242.30px;top:326.70px;width:16.10px;height:12.80px;line-height:12.80px;font-size:6.0px;font-weight:normal;color:#222;text-align:center;-webkit-text-stroke:0.15px #222;transform:scale(1,1.18);transform-origin:50% 50%;">L3</div>
<div class="t" style="left:1057.50px;top:326.70px;width:20.90px;height:12.80px;line-height:12.80px;font-size:6.0px;font-weight:normal;color:#2a2a2a;text-align:center;-webkit-text-stroke:0.18px #2a2a2a;transform:scale(1,1.18);transform-origin:50% 50%;">12</div>
<div class="t" style="left:1041.30px;top:326.70px;width:16.20px;height:12.80px;line-height:12.80px;font-size:6.0px;font-weight:normal;color:#222;text-align:center;-webkit-text-stroke:0.15px #222;transform:scale(1,1.18);transform-origin:50% 50%;">L3</div>
<div class="a" style="left:220.80px;top:325.90px;width:21.50px;height:1.00px;background:#b6b6b6;"></div>
<div class="a" style="left:242.30px;top:325.90px;width:16.10px;height:1.00px;background:#d9e8ea;"></div>
<div class="a" style="left:1041.30px;top:325.90px;width:16.20px;height:1.00px;background:#d9e8ea;"></div>
<div class="a" style="left:1057.50px;top:325.90px;width:20.90px;height:1.00px;background:#b6b6b6;"></div>
<div class="a" style="left:220.80px;top:339.20px;width:21.50px;height:12.80px;background:#bdbdbd;"></div>
<div class="a" style="left:242.30px;top:339.20px;width:16.10px;height:12.80px;background:#e9fbfd;"></div>
<div class="a" style="left:1057.50px;top:339.20px;width:20.90px;height:12.80px;background:#bdbdbd;"></div>
<div class="a" style="left:1041.30px;top:339.20px;width:16.20px;height:12.80px;background:#e9fbfd;"></div>
<div class="t" style="left:220.80px;top:339.50px;width:21.50px;height:12.80px;line-height:12.80px;font-size:6.0px;font-weight:normal;color:#2a2a2a;text-align:center;-webkit-text-stroke:0.18px #2a2a2a;transform:scale(1,1.18);transform-origin:50% 50%;">13</div>
<div class="t" style="left:242.30px;top:339.50px;width:16.10px;height:12.80px;line-height:12.80px;font-size:6.0px;font-weight:normal;color:#222;text-align:center;-webkit-text-stroke:0.15px #222;transform:scale(1,1.18);transform-origin:50% 50%;">L1</div>
<div class="t" style="left:1057.50px;top:339.50px;width:20.90px;height:12.80px;line-height:12.80px;font-size:6.0px;font-weight:normal;color:#2a2a2a;text-align:center;-webkit-text-stroke:0.18px #2a2a2a;transform:scale(1,1.18);transform-origin:50% 50%;">14</div>
<div class="t" style="left:1041.30px;top:339.50px;width:16.20px;height:12.80px;line-height:12.80px;font-size:6.0px;font-weight:normal;color:#222;text-align:center;-webkit-text-stroke:0.15px #222;transform:scale(1,1.18);transform-origin:50% 50%;">L1</div>
<div class="a" style="left:220.80px;top:338.70px;width:21.50px;height:1.00px;background:#b6b6b6;"></div>
<div class="a" style="left:242.30px;top:338.70px;width:16.10px;height:1.00px;background:#d9e8ea;"></div>
<div class="a" style="left:1041.30px;top:338.70px;width:16.20px;height:1.00px;background:#d9e8ea;"></div>
<div class="a" style="left:1057.50px;top:338.70px;width:20.90px;height:1.00px;background:#b6b6b6;"></div>
<div class="a" style="left:220.80px;top:352.00px;width:21.50px;height:12.80px;background:#bdbdbd;"></div>
<div class="a" style="left:242.30px;top:352.00px;width:16.10px;height:12.80px;background:#e9fbfd;"></div>
<div class="a" style="left:1057.50px;top:352.00px;width:20.90px;height:12.80px;background:#bdbdbd;"></div>
<div class="a" style="left:1041.30px;top:352.00px;width:16.20px;height:12.80px;background:#e9fbfd;"></div>
<div class="t" style="left:220.80px;top:352.30px;width:21.50px;height:12.80px;line-height:12.80px;font-size:6.0px;font-weight:normal;color:#2a2a2a;text-align:center;-webkit-text-stroke:0.18px #2a2a2a;transform:scale(1,1.18);transform-origin:50% 50%;">15</div>
<div class="t" style="left:242.30px;top:352.30px;width:16.10px;height:12.80px;line-height:12.80px;font-size:6.0px;font-weight:normal;color:#222;text-align:center;-webkit-text-stroke:0.15px #222;transform:scale(1,1.18);transform-origin:50% 50%;">L2</div>
<div class="t" style="left:1057.50px;top:352.30px;width:20.90px;height:12.80px;line-height:12.80px;font-size:6.0px;font-weight:normal;color:#2a2a2a;text-align:center;-webkit-text-stroke:0.18px #2a2a2a;transform:scale(1,1.18);transform-origin:50% 50%;">16</div>
<div class="t" style="left:1041.30px;top:352.30px;width:16.20px;height:12.80px;line-height:12.80px;font-size:6.0px;font-weight:normal;color:#222;text-align:center;-webkit-text-stroke:0.15px #222;transform:scale(1,1.18);transform-origin:50% 50%;">L2</div>
<div class="a" style="left:220.80px;top:351.50px;width:21.50px;height:1.00px;background:#b6b6b6;"></div>
<div class="a" style="left:242.30px;top:351.50px;width:16.10px;height:1.00px;background:#d9e8ea;"></div>
<div class="a" style="left:1041.30px;top:351.50px;width:16.20px;height:1.00px;background:#d9e8ea;"></div>
<div class="a" style="left:1057.50px;top:351.50px;width:20.90px;height:1.00px;background:#b6b6b6;"></div>
<div class="a" style="left:220.80px;top:364.80px;width:21.50px;height:12.80px;background:#bdbdbd;"></div>
<div class="a" style="left:242.30px;top:364.80px;width:16.10px;height:12.80px;background:#e9fbfd;"></div>
<div class="a" style="left:1057.50px;top:364.80px;width:20.90px;height:12.80px;background:#bdbdbd;"></div>
<div class="a" style="left:1041.30px;top:364.80px;width:16.20px;height:12.80px;background:#e9fbfd;"></div>
<div class="t" style="left:220.80px;top:365.10px;width:21.50px;height:12.80px;line-height:12.80px;font-size:6.0px;font-weight:normal;color:#2a2a2a;text-align:center;-webkit-text-stroke:0.18px #2a2a2a;transform:scale(1,1.18);transform-origin:50% 50%;">17</div>
<div class="t" style="left:242.30px;top:365.10px;width:16.10px;height:12.80px;line-height:12.80px;font-size:6.0px;font-weight:normal;color:#222;text-align:center;-webkit-text-stroke:0.15px #222;transform:scale(1,1.18);transform-origin:50% 50%;">L3</div>
<div class="t" style="left:1057.50px;top:365.10px;width:20.90px;height:12.80px;line-height:12.80px;font-size:6.0px;font-weight:normal;color:#2a2a2a;text-align:center;-webkit-text-stroke:0.18px #2a2a2a;transform:scale(1,1.18);transform-origin:50% 50%;">18</div>
<div class="t" style="left:1041.30px;top:365.10px;width:16.20px;height:12.80px;line-height:12.80px;font-size:6.0px;font-weight:normal;color:#222;text-align:center;-webkit-text-stroke:0.15px #222;transform:scale(1,1.18);transform-origin:50% 50%;">L3</div>
<div class="a" style="left:220.80px;top:364.30px;width:21.50px;height:1.00px;background:#b6b6b6;"></div>
<div class="a" style="left:242.30px;top:364.30px;width:16.10px;height:1.00px;background:#d9e8ea;"></div>
<div class="a" style="left:1041.30px;top:364.30px;width:16.20px;height:1.00px;background:#d9e8ea;"></div>
<div class="a" style="left:1057.50px;top:364.30px;width:20.90px;height:1.00px;background:#b6b6b6;"></div>
<div class="a" style="left:220.80px;top:377.60px;width:21.50px;height:12.80px;background:#bdbdbd;"></div>
<div class="a" style="left:242.30px;top:377.60px;width:16.10px;height:12.80px;background:#e9fbfd;"></div>
<div class="a" style="left:1057.50px;top:377.60px;width:20.90px;height:12.80px;background:#bdbdbd;"></div>
<div class="a" style="left:1041.30px;top:377.60px;width:16.20px;height:12.80px;background:#e9fbfd;"></div>
<div class="t" style="left:220.80px;top:377.90px;width:21.50px;height:12.80px;line-height:12.80px;font-size:6.0px;font-weight:normal;color:#2a2a2a;text-align:center;-webkit-text-stroke:0.18px #2a2a2a;transform:scale(1,1.18);transform-origin:50% 50%;">19</div>
<div class="t" style="left:242.30px;top:377.90px;width:16.10px;height:12.80px;line-height:12.80px;font-size:6.0px;font-weight:normal;color:#222;text-align:center;-webkit-text-stroke:0.15px #222;transform:scale(1,1.18);transform-origin:50% 50%;">L1</div>
<div class="t" style="left:1057.50px;top:377.90px;width:20.90px;height:12.80px;line-height:12.80px;font-size:6.0px;font-weight:normal;color:#2a2a2a;text-align:center;-webkit-text-stroke:0.18px #2a2a2a;transform:scale(1,1.18);transform-origin:50% 50%;">20</div>
<div class="t" style="left:1041.30px;top:377.90px;width:16.20px;height:12.80px;line-height:12.80px;font-size:6.0px;font-weight:normal;color:#222;text-align:center;-webkit-text-stroke:0.15px #222;transform:scale(1,1.18);transform-origin:50% 50%;">L1</div>
<div class="a" style="left:220.80px;top:377.10px;width:21.50px;height:1.00px;background:#b6b6b6;"></div>
<div class="a" style="left:242.30px;top:377.10px;width:16.10px;height:1.00px;background:#d9e8ea;"></div>
<div class="a" style="left:1041.30px;top:377.10px;width:16.20px;height:1.00px;background:#d9e8ea;"></div>
<div class="a" style="left:1057.50px;top:377.10px;width:20.90px;height:1.00px;background:#b6b6b6;"></div>
<div class="a" style="left:220.80px;top:390.40px;width:21.50px;height:12.80px;background:#bdbdbd;"></div>
<div class="a" style="left:242.30px;top:390.40px;width:16.10px;height:12.80px;background:#e9fbfd;"></div>
<div class="a" style="left:1057.50px;top:390.40px;width:20.90px;height:12.80px;background:#bdbdbd;"></div>
<div class="a" style="left:1041.30px;top:390.40px;width:16.20px;height:12.80px;background:#e9fbfd;"></div>
<div class="t" style="left:220.80px;top:390.70px;width:21.50px;height:12.80px;line-height:12.80px;font-size:6.0px;font-weight:normal;color:#2a2a2a;text-align:center;-webkit-text-stroke:0.18px #2a2a2a;transform:scale(1,1.18);transform-origin:50% 50%;">21</div>
<div class="t" style="left:242.30px;top:390.70px;width:16.10px;height:12.80px;line-height:12.80px;font-size:6.0px;font-weight:normal;color:#222;text-align:center;-webkit-text-stroke:0.15px #222;transform:scale(1,1.18);transform-origin:50% 50%;">L2</div>
<div class="t" style="left:1057.50px;top:390.70px;width:20.90px;height:12.80px;line-height:12.80px;font-size:6.0px;font-weight:normal;color:#2a2a2a;text-align:center;-webkit-text-stroke:0.18px #2a2a2a;transform:scale(1,1.18);transform-origin:50% 50%;">22</div>
<div class="t" style="left:1041.30px;top:390.70px;width:16.20px;height:12.80px;line-height:12.80px;font-size:6.0px;font-weight:normal;color:#222;text-align:center;-webkit-text-stroke:0.15px #222;transform:scale(1,1.18);transform-origin:50% 50%;">L2</div>
<div class="a" style="left:220.80px;top:389.90px;width:21.50px;height:1.00px;background:#b6b6b6;"></div>
<div class="a" style="left:242.30px;top:389.90px;width:16.10px;height:1.00px;background:#d9e8ea;"></div>
<div class="a" style="left:1041.30px;top:389.90px;width:16.20px;height:1.00px;background:#d9e8ea;"></div>
<div class="a" style="left:1057.50px;top:389.90px;width:20.90px;height:1.00px;background:#b6b6b6;"></div>
<div class="a" style="left:220.80px;top:403.20px;width:21.50px;height:12.80px;background:#bdbdbd;"></div>
<div class="a" style="left:242.30px;top:403.20px;width:16.10px;height:12.80px;background:#e9fbfd;"></div>
<div class="a" style="left:1057.50px;top:403.20px;width:20.90px;height:12.80px;background:#bdbdbd;"></div>
<div class="a" style="left:1041.30px;top:403.20px;width:16.20px;height:12.80px;background:#e9fbfd;"></div>
<div class="t" style="left:220.80px;top:403.50px;width:21.50px;height:12.80px;line-height:12.80px;font-size:6.0px;font-weight:normal;color:#2a2a2a;text-align:center;-webkit-text-stroke:0.18px #2a2a2a;transform:scale(1,1.18);transform-origin:50% 50%;">23</div>
<div class="t" style="left:242.30px;top:403.50px;width:16.10px;height:12.80px;line-height:12.80px;font-size:6.0px;font-weight:normal;color:#222;text-align:center;-webkit-text-stroke:0.15px #222;transform:scale(1,1.18);transform-origin:50% 50%;">L3</div>
<div class="t" style="left:1057.50px;top:403.50px;width:20.90px;height:12.80px;line-height:12.80px;font-size:6.0px;font-weight:normal;color:#2a2a2a;text-align:center;-webkit-text-stroke:0.18px #2a2a2a;transform:scale(1,1.18);transform-origin:50% 50%;">24</div>
<div class="t" style="left:1041.30px;top:403.50px;width:16.20px;height:12.80px;line-height:12.80px;font-size:6.0px;font-weight:normal;color:#222;text-align:center;-webkit-text-stroke:0.15px #222;transform:scale(1,1.18);transform-origin:50% 50%;">L3</div>
<div class="a" style="left:220.80px;top:402.70px;width:21.50px;height:1.00px;background:#b6b6b6;"></div>
<div class="a" style="left:242.30px;top:402.70px;width:16.10px;height:1.00px;background:#d9e8ea;"></div>
<div class="a" style="left:1041.30px;top:402.70px;width:16.20px;height:1.00px;background:#d9e8ea;"></div>
<div class="a" style="left:1057.50px;top:402.70px;width:20.90px;height:1.00px;background:#b6b6b6;"></div>
<div class="a" style="left:220.80px;top:416.00px;width:21.50px;height:12.80px;background:#bdbdbd;"></div>
<div class="a" style="left:242.30px;top:416.00px;width:16.10px;height:12.80px;background:#e9fbfd;"></div>
<div class="a" style="left:1057.50px;top:416.00px;width:20.90px;height:12.80px;background:#bdbdbd;"></div>
<div class="a" style="left:1041.30px;top:416.00px;width:16.20px;height:12.80px;background:#e9fbfd;"></div>
<div class="t" style="left:220.80px;top:416.30px;width:21.50px;height:12.80px;line-height:12.80px;font-size:6.0px;font-weight:normal;color:#2a2a2a;text-align:center;-webkit-text-stroke:0.18px #2a2a2a;transform:scale(1,1.18);transform-origin:50% 50%;">25</div>
<div class="t" style="left:242.30px;top:416.30px;width:16.10px;height:12.80px;line-height:12.80px;font-size:6.0px;font-weight:normal;color:#222;text-align:center;-webkit-text-stroke:0.15px #222;transform:scale(1,1.18);transform-origin:50% 50%;">L1</div>
<div class="t" style="left:1057.50px;top:416.30px;width:20.90px;height:12.80px;line-height:12.80px;font-size:6.0px;font-weight:normal;color:#2a2a2a;text-align:center;-webkit-text-stroke:0.18px #2a2a2a;transform:scale(1,1.18);transform-origin:50% 50%;">26</div>
<div class="t" style="left:1041.30px;top:416.30px;width:16.20px;height:12.80px;line-height:12.80px;font-size:6.0px;font-weight:normal;color:#222;text-align:center;-webkit-text-stroke:0.15px #222;transform:scale(1,1.18);transform-origin:50% 50%;">L1</div>
<div class="a" style="left:220.80px;top:415.50px;width:21.50px;height:1.00px;background:#b6b6b6;"></div>
<div class="a" style="left:242.30px;top:415.50px;width:16.10px;height:1.00px;background:#d9e8ea;"></div>
<div class="a" style="left:1041.30px;top:415.50px;width:16.20px;height:1.00px;background:#d9e8ea;"></div>
<div class="a" style="left:1057.50px;top:415.50px;width:20.90px;height:1.00px;background:#b6b6b6;"></div>
<div class="a" style="left:220.80px;top:428.80px;width:21.50px;height:12.80px;background:#bdbdbd;"></div>
<div class="a" style="left:242.30px;top:428.80px;width:16.10px;height:12.80px;background:#e9fbfd;"></div>
<div class="a" style="left:1057.50px;top:428.80px;width:20.90px;height:12.80px;background:#bdbdbd;"></div>
<div class="a" style="left:1041.30px;top:428.80px;width:16.20px;height:12.80px;background:#e9fbfd;"></div>
<div class="t" style="left:220.80px;top:429.10px;width:21.50px;height:12.80px;line-height:12.80px;font-size:6.0px;font-weight:normal;color:#2a2a2a;text-align:center;-webkit-text-stroke:0.18px #2a2a2a;transform:scale(1,1.18);transform-origin:50% 50%;">27</div>
<div class="t" style="left:242.30px;top:429.10px;width:16.10px;height:12.80px;line-height:12.80px;font-size:6.0px;font-weight:normal;color:#222;text-align:center;-webkit-text-stroke:0.15px #222;transform:scale(1,1.18);transform-origin:50% 50%;">L2</div>
<div class="t" style="left:1057.50px;top:429.10px;width:20.90px;height:12.80px;line-height:12.80px;font-size:6.0px;font-weight:normal;color:#2a2a2a;text-align:center;-webkit-text-stroke:0.18px #2a2a2a;transform:scale(1,1.18);transform-origin:50% 50%;">28</div>
<div class="t" style="left:1041.30px;top:429.10px;width:16.20px;height:12.80px;line-height:12.80px;font-size:6.0px;font-weight:normal;color:#222;text-align:center;-webkit-text-stroke:0.15px #222;transform:scale(1,1.18);transform-origin:50% 50%;">L2</div>
<div class="a" style="left:220.80px;top:428.30px;width:21.50px;height:1.00px;background:#b6b6b6;"></div>
<div class="a" style="left:242.30px;top:428.30px;width:16.10px;height:1.00px;background:#d9e8ea;"></div>
<div class="a" style="left:1041.30px;top:428.30px;width:16.20px;height:1.00px;background:#d9e8ea;"></div>
<div class="a" style="left:1057.50px;top:428.30px;width:20.90px;height:1.00px;background:#b6b6b6;"></div>
<div class="a" style="left:220.80px;top:441.60px;width:21.50px;height:12.80px;background:#bdbdbd;"></div>
<div class="a" style="left:242.30px;top:441.60px;width:16.10px;height:12.80px;background:#e9fbfd;"></div>
<div class="a" style="left:1057.50px;top:441.60px;width:20.90px;height:12.80px;background:#bdbdbd;"></div>
<div class="a" style="left:1041.30px;top:441.60px;width:16.20px;height:12.80px;background:#e9fbfd;"></div>
<div class="t" style="left:220.80px;top:441.90px;width:21.50px;height:12.80px;line-height:12.80px;font-size:6.0px;font-weight:normal;color:#2a2a2a;text-align:center;-webkit-text-stroke:0.18px #2a2a2a;transform:scale(1,1.18);transform-origin:50% 50%;">29</div>
<div class="t" style="left:242.30px;top:441.90px;width:16.10px;height:12.80px;line-height:12.80px;font-size:6.0px;font-weight:normal;color:#222;text-align:center;-webkit-text-stroke:0.15px #222;transform:scale(1,1.18);transform-origin:50% 50%;">L3</div>
<div class="t" style="left:1057.50px;top:441.90px;width:20.90px;height:12.80px;line-height:12.80px;font-size:6.0px;font-weight:normal;color:#2a2a2a;text-align:center;-webkit-text-stroke:0.18px #2a2a2a;transform:scale(1,1.18);transform-origin:50% 50%;">30</div>
<div class="t" style="left:1041.30px;top:441.90px;width:16.20px;height:12.80px;line-height:12.80px;font-size:6.0px;font-weight:normal;color:#222;text-align:center;-webkit-text-stroke:0.15px #222;transform:scale(1,1.18);transform-origin:50% 50%;">L3</div>
<div class="a" style="left:220.80px;top:441.10px;width:21.50px;height:1.00px;background:#b6b6b6;"></div>
<div class="a" style="left:242.30px;top:441.10px;width:16.10px;height:1.00px;background:#d9e8ea;"></div>
<div class="a" style="left:1041.30px;top:441.10px;width:16.20px;height:1.00px;background:#d9e8ea;"></div>
<div class="a" style="left:1057.50px;top:441.10px;width:20.90px;height:1.00px;background:#b6b6b6;"></div>
<div class="a" style="left:220.80px;top:454.40px;width:21.50px;height:12.80px;background:#bdbdbd;"></div>
<div class="a" style="left:242.30px;top:454.40px;width:16.10px;height:12.80px;background:#e9fbfd;"></div>
<div class="a" style="left:1057.50px;top:454.40px;width:20.90px;height:12.80px;background:#bdbdbd;"></div>
<div class="a" style="left:1041.30px;top:454.40px;width:16.20px;height:12.80px;background:#e9fbfd;"></div>
<div class="t" style="left:220.80px;top:454.70px;width:21.50px;height:12.80px;line-height:12.80px;font-size:6.0px;font-weight:normal;color:#2a2a2a;text-align:center;-webkit-text-stroke:0.18px #2a2a2a;transform:scale(1,1.18);transform-origin:50% 50%;">31</div>
<div class="t" style="left:242.30px;top:454.70px;width:16.10px;height:12.80px;line-height:12.80px;font-size:6.0px;font-weight:normal;color:#222;text-align:center;-webkit-text-stroke:0.15px #222;transform:scale(1,1.18);transform-origin:50% 50%;">L1</div>
<div class="t" style="left:1057.50px;top:454.70px;width:20.90px;height:12.80px;line-height:12.80px;font-size:6.0px;font-weight:normal;color:#2a2a2a;text-align:center;-webkit-text-stroke:0.18px #2a2a2a;transform:scale(1,1.18);transform-origin:50% 50%;">32</div>
<div class="t" style="left:1041.30px;top:454.70px;width:16.20px;height:12.80px;line-height:12.80px;font-size:6.0px;font-weight:normal;color:#222;text-align:center;-webkit-text-stroke:0.15px #222;transform:scale(1,1.18);transform-origin:50% 50%;">L1</div>
<div class="a" style="left:220.80px;top:453.90px;width:21.50px;height:1.00px;background:#b6b6b6;"></div>
<div class="a" style="left:242.30px;top:453.90px;width:16.10px;height:1.00px;background:#d9e8ea;"></div>
<div class="a" style="left:1041.30px;top:453.90px;width:16.20px;height:1.00px;background:#d9e8ea;"></div>
<div class="a" style="left:1057.50px;top:453.90px;width:20.90px;height:1.00px;background:#b6b6b6;"></div>
<div class="a" style="left:518.60px;top:262.40px;width:34.90px;height:38.40px;background:#fafcf1;"></div>
<div class="a" style="left:518.60px;top:261.90px;width:34.90px;height:1.00px;background:#d7ebcb;"></div>
<div class="t" style="left:518.60px;top:262.70px;width:34.90px;height:38.40px;line-height:38.40px;font-size:6.0px;font-weight:normal;color:#222;text-align:center;-webkit-text-stroke:0.2px #222;transform:scale(1,1.18);transform-origin:50% 50%;">6.7 W</div>
<div class="a" style="left:518.60px;top:300.80px;width:34.90px;height:38.40px;background:#fafcf1;"></div>
<div class="a" style="left:518.60px;top:300.30px;width:34.90px;height:1.00px;background:#d7ebcb;"></div>
<div class="t" style="left:518.60px;top:301.10px;width:34.90px;height:38.40px;line-height:38.40px;font-size:6.0px;font-weight:normal;color:#222;text-align:center;-webkit-text-stroke:0.2px #222;transform:scale(1,1.18);transform-origin:50% 50%;">--</div>
<div class="a" style="left:518.60px;top:339.20px;width:34.90px;height:12.80px;background:#fafcf1;"></div>
<div class="a" style="left:518.60px;top:338.70px;width:34.90px;height:1.00px;background:#d7ebcb;"></div>
<div class="t" style="left:518.60px;top:339.50px;width:34.90px;height:12.80px;line-height:12.80px;font-size:6.0px;font-weight:normal;color:#222;text-align:center;-webkit-text-stroke:0.2px #222;transform:scale(1,1.18);transform-origin:50% 50%;">14.2 W</div>
<div class="a" style="left:518.60px;top:352.00px;width:34.90px;height:12.80px;background:#fafcf1;"></div>
<div class="a" style="left:518.60px;top:351.50px;width:34.90px;height:1.00px;background:#d7ebcb;"></div>
<div class="t" style="left:518.60px;top:352.30px;width:34.90px;height:12.80px;line-height:12.80px;font-size:6.0px;font-weight:normal;color:#222;text-align:center;-webkit-text-stroke:0.2px #222;transform:scale(1,1.18);transform-origin:50% 50%;">424.2 W</div>
<div class="a" style="left:518.60px;top:364.80px;width:34.90px;height:38.40px;background:#fafcf1;"></div>
<div class="a" style="left:518.60px;top:364.30px;width:34.90px;height:1.00px;background:#d7ebcb;"></div>
<div class="t" style="left:518.60px;top:365.10px;width:34.90px;height:38.40px;line-height:38.40px;font-size:6.0px;font-weight:normal;color:#222;text-align:center;-webkit-text-stroke:0.2px #222;transform:scale(1,1.18);transform-origin:50% 50%;">5.4 W</div>
<div class="a" style="left:518.60px;top:403.20px;width:34.90px;height:38.40px;background:#fafcf1;"></div>
<div class="a" style="left:518.60px;top:402.70px;width:34.90px;height:1.00px;background:#d7ebcb;"></div>
<div class="t" style="left:518.60px;top:403.50px;width:34.90px;height:38.40px;line-height:38.40px;font-size:6.0px;font-weight:normal;color:#222;text-align:center;-webkit-text-stroke:0.2px #222;transform:scale(1,1.18);transform-origin:50% 50%;">0.0 W</div>
<div class="a" style="left:518.60px;top:441.60px;width:34.90px;height:12.80px;background:#fafcf1;"></div>
<div class="a" style="left:518.60px;top:441.10px;width:34.90px;height:1.00px;background:#d7ebcb;"></div>
<div class="t" style="left:518.60px;top:441.90px;width:34.90px;height:12.80px;line-height:12.80px;font-size:6.0px;font-weight:normal;color:#222;text-align:center;-webkit-text-stroke:0.2px #222;transform:scale(1,1.18);transform-origin:50% 50%;">191.7 W</div>
<div class="a" style="left:518.60px;top:454.40px;width:34.90px;height:12.80px;background:#fafcf1;"></div>
<div class="a" style="left:518.60px;top:453.90px;width:34.90px;height:1.00px;background:#d7ebcb;"></div>
<div class="t" style="left:518.60px;top:454.70px;width:34.90px;height:12.80px;line-height:12.80px;font-size:6.0px;font-weight:normal;color:#222;text-align:center;-webkit-text-stroke:0.2px #222;transform:scale(1,1.18);transform-origin:50% 50%;"></div>
<div class="a" style="left:553.50px;top:262.40px;width:33.60px;height:12.80px;background:#fafcf1;"></div>
<div class="a" style="left:553.50px;top:261.90px;width:33.60px;height:1.00px;background:#d7ebcb;"></div>
<div class="t" style="left:553.50px;top:262.70px;width:33.60px;height:12.80px;line-height:12.80px;font-size:6.0px;font-weight:normal;color:#222;text-align:center;-webkit-text-stroke:0.2px #222;transform:scale(1,1.18);transform-origin:50% 50%;">500 mA</div>
<div class="a" style="left:553.50px;top:275.20px;width:33.60px;height:12.80px;background:#fafcf1;"></div>
<div class="a" style="left:553.50px;top:274.70px;width:33.60px;height:1.00px;background:#d7ebcb;"></div>
<div class="t" style="left:553.50px;top:275.50px;width:33.60px;height:12.80px;line-height:12.80px;font-size:6.0px;font-weight:normal;color:#222;text-align:center;-webkit-text-stroke:0.2px #222;transform:scale(1,1.18);transform-origin:50% 50%;">500 mA</div>
<div class="a" style="left:553.50px;top:288.00px;width:33.60px;height:12.80px;background:#fafcf1;"></div>
<div class="a" style="left:553.50px;top:287.50px;width:33.60px;height:1.00px;background:#d7ebcb;"></div>
<div class="t" style="left:553.50px;top:288.30px;width:33.60px;height:12.80px;line-height:12.80px;font-size:6.0px;font-weight:normal;color:#222;text-align:center;-webkit-text-stroke:0.2px #222;transform:scale(1,1.18);transform-origin:50% 50%;">500 mA</div>
<div class="a" style="left:553.50px;top:300.80px;width:33.60px;height:12.80px;background:#fafcf1;"></div>
<div class="a" style="left:553.50px;top:300.30px;width:33.60px;height:1.00px;background:#d7ebcb;"></div>
<div class="t" style="left:553.50px;top:301.10px;width:33.60px;height:12.80px;line-height:12.80px;font-size:6.0px;font-weight:normal;color:#222;text-align:center;-webkit-text-stroke:0.2px #222;transform:scale(1,1.18);transform-origin:50% 50%;">--</div>
<div class="a" style="left:553.50px;top:313.60px;width:33.60px;height:12.80px;background:#fafcf1;"></div>
<div class="a" style="left:553.50px;top:313.10px;width:33.60px;height:1.00px;background:#d7ebcb;"></div>
<div class="t" style="left:553.50px;top:313.90px;width:33.60px;height:12.80px;line-height:12.80px;font-size:6.0px;font-weight:normal;color:#222;text-align:center;-webkit-text-stroke:0.2px #222;transform:scale(1,1.18);transform-origin:50% 50%;">--</div>
<div class="a" style="left:553.50px;top:326.40px;width:33.60px;height:12.80px;background:#fafcf1;"></div>
<div class="a" style="left:553.50px;top:325.90px;width:33.60px;height:1.00px;background:#d7ebcb;"></div>
<div class="t" style="left:553.50px;top:326.70px;width:33.60px;height:12.80px;line-height:12.80px;font-size:6.0px;font-weight:normal;color:#222;text-align:center;-webkit-text-stroke:0.2px #222;transform:scale(1,1.18);transform-origin:50% 50%;">--</div>
<div class="a" style="left:553.50px;top:339.20px;width:33.60px;height:12.80px;background:#fafcf1;"></div>
<div class="a" style="left:553.50px;top:338.70px;width:33.60px;height:1.00px;background:#d7ebcb;"></div>
<div class="t" style="left:553.50px;top:339.50px;width:33.60px;height:12.80px;line-height:12.80px;font-size:6.0px;font-weight:normal;color:#222;text-align:center;-webkit-text-stroke:0.2px #222;transform:scale(1,1.18);transform-origin:50% 50%;">300 mA</div>
<div class="a" style="left:553.50px;top:352.00px;width:33.60px;height:12.80px;background:#fafcf1;"></div>
<div class="a" style="left:553.50px;top:351.50px;width:33.60px;height:1.00px;background:#d7ebcb;"></div>
<div class="t" style="left:553.50px;top:352.30px;width:33.60px;height:12.80px;line-height:12.80px;font-size:6.0px;font-weight:normal;color:#222;text-align:center;-webkit-text-stroke:0.2px #222;transform:scale(1,1.18);transform-origin:50% 50%;">4.1 A</div>
<div class="a" style="left:553.50px;top:364.80px;width:33.60px;height:12.80px;background:#fafcf1;"></div>
<div class="a" style="left:553.50px;top:364.30px;width:33.60px;height:1.00px;background:#d7ebcb;"></div>
<div class="t" style="left:553.50px;top:365.10px;width:33.60px;height:12.80px;line-height:12.80px;font-size:6.0px;font-weight:normal;color:#222;text-align:center;-webkit-text-stroke:0.2px #222;transform:scale(1,1.18);transform-origin:50% 50%;">300 mA</div>
<div class="a" style="left:553.50px;top:377.60px;width:33.60px;height:12.80px;background:#fafcf1;"></div>
<div class="a" style="left:553.50px;top:377.10px;width:33.60px;height:1.00px;background:#d7ebcb;"></div>
<div class="t" style="left:553.50px;top:377.90px;width:33.60px;height:12.80px;line-height:12.80px;font-size:6.0px;font-weight:normal;color:#222;text-align:center;-webkit-text-stroke:0.2px #222;transform:scale(1,1.18);transform-origin:50% 50%;">0.0 A</div>
<div class="a" style="left:553.50px;top:390.40px;width:33.60px;height:12.80px;background:#fafcf1;"></div>
<div class="a" style="left:553.50px;top:389.90px;width:33.60px;height:1.00px;background:#d7ebcb;"></div>
<div class="t" style="left:553.50px;top:390.70px;width:33.60px;height:12.80px;line-height:12.80px;font-size:6.0px;font-weight:normal;color:#222;text-align:center;-webkit-text-stroke:0.2px #222;transform:scale(1,1.18);transform-origin:50% 50%;">0.0 A</div>
<div class="a" style="left:553.50px;top:403.20px;width:33.60px;height:12.80px;background:#fafcf1;"></div>
<div class="a" style="left:553.50px;top:402.70px;width:33.60px;height:1.00px;background:#d7ebcb;"></div>
<div class="t" style="left:553.50px;top:403.50px;width:33.60px;height:12.80px;line-height:12.80px;font-size:6.0px;font-weight:normal;color:#222;text-align:center;-webkit-text-stroke:0.2px #222;transform:scale(1,1.18);transform-origin:50% 50%;">0.0 A</div>
<div class="a" style="left:553.50px;top:416.00px;width:33.60px;height:12.80px;background:#fafcf1;"></div>
<div class="a" style="left:553.50px;top:415.50px;width:33.60px;height:1.00px;background:#d7ebcb;"></div>
<div class="t" style="left:553.50px;top:416.30px;width:33.60px;height:12.80px;line-height:12.80px;font-size:6.0px;font-weight:normal;color:#222;text-align:center;-webkit-text-stroke:0.2px #222;transform:scale(1,1.18);transform-origin:50% 50%;">0.0 A</div>
<div class="a" style="left:553.50px;top:428.80px;width:33.60px;height:12.80px;background:#fafcf1;"></div>
<div class="a" style="left:553.50px;top:428.30px;width:33.60px;height:1.00px;background:#d7ebcb;"></div>
<div class="t" style="left:553.50px;top:429.10px;width:33.60px;height:12.80px;line-height:12.80px;font-size:6.0px;font-weight:normal;color:#222;text-align:center;-webkit-text-stroke:0.2px #222;transform:scale(1,1.18);transform-origin:50% 50%;">0.0 A</div>
<div class="a" style="left:553.50px;top:441.60px;width:33.60px;height:12.80px;background:#fafcf1;"></div>
<div class="a" style="left:553.50px;top:441.10px;width:33.60px;height:1.00px;background:#d7ebcb;"></div>
<div class="t" style="left:553.50px;top:441.90px;width:33.60px;height:12.80px;line-height:12.80px;font-size:6.0px;font-weight:normal;color:#222;text-align:center;-webkit-text-stroke:0.2px #222;transform:scale(1,1.18);transform-origin:50% 50%;">2.4 A</div>
<div class="a" style="left:553.50px;top:454.40px;width:33.60px;height:12.80px;background:#fafcf1;"></div>
<div class="a" style="left:553.50px;top:453.90px;width:33.60px;height:1.00px;background:#d7ebcb;"></div>
<div class="t" style="left:553.50px;top:454.70px;width:33.60px;height:12.80px;line-height:12.80px;font-size:6.0px;font-weight:normal;color:#222;text-align:center;-webkit-text-stroke:0.2px #222;transform:scale(1,1.18);transform-origin:50% 50%;"></div>
<div class="a" style="left:553.00px;top:262.40px;width:1.00px;height:198.60px;background:#d7ebcb;"></div>
<div class="a" style="left:586.60px;top:262.40px;width:1.00px;height:198.60px;background:#d7ebcb;"></div>
<div class="a" style="left:518.10px;top:262.40px;width:1.00px;height:198.60px;background:#e2e2e2;"></div>
<div class="a" style="left:258.40px;top:261.90px;width:260.20px;height:1.00px;background:#e2e2e2;"></div>
<div class="t" style="left:262.70px;top:262.70px;width:255.90px;height:38.40px;line-height:38.40px;font-size:6.0px;font-weight:normal;color:#2176d2;text-align:left;-webkit-text-stroke:0.15px #2176d2;transform:scale(0.965,1.18);transform-origin:0 50%;">RTU 1_1-3-5</div>
<div class="a" style="left:258.40px;top:300.30px;width:260.20px;height:1.00px;background:#e2e2e2;"></div>
<div class="t" style="left:262.70px;top:301.10px;width:255.90px;height:38.40px;line-height:38.40px;font-size:6.0px;font-weight:normal;color:#2176d2;text-align:left;-webkit-text-stroke:0.15px #2176d2;transform:scale(0.965,1.18);transform-origin:0 50%;">RTU 2_7-9-11</div>
<div class="a" style="left:258.40px;top:338.70px;width:260.20px;height:1.00px;background:#e2e2e2;"></div>
<div class="t" style="left:262.70px;top:339.50px;width:255.90px;height:12.80px;line-height:12.80px;font-size:6.0px;font-weight:normal;color:#2176d2;text-align:left;-webkit-text-stroke:0.15px #2176d2;transform:scale(0.965,1.18);transform-origin:0 50%;">Rooftop_13</div>
<div class="a" style="left:258.40px;top:351.50px;width:260.20px;height:1.00px;background:#e2e2e2;"></div>
<div class="t" style="left:262.70px;top:352.30px;width:255.90px;height:12.80px;line-height:12.80px;font-size:6.0px;font-weight:normal;color:#2176d2;text-align:left;-webkit-text-stroke:0.15px #2176d2;transform:scale(0.965,1.18);transform-origin:0 50%;">East Warehouse_15</div>
<div class="a" style="left:258.40px;top:364.30px;width:260.20px;height:1.00px;background:#e2e2e2;"></div>
<div class="t" style="left:262.70px;top:365.10px;width:255.90px;height:38.40px;line-height:38.40px;font-size:6.0px;font-weight:normal;color:#2176d2;text-align:left;-webkit-text-stroke:0.15px #2176d2;transform:scale(0.965,1.18);transform-origin:0 50%;">East Warehouse_17-19-21</div>
<div class="a" style="left:258.40px;top:402.70px;width:260.20px;height:1.00px;background:#e2e2e2;"></div>
<div class="t" style="left:262.70px;top:403.50px;width:255.90px;height:38.40px;line-height:38.40px;font-size:6.0px;font-weight:normal;color:#2176d2;text-align:left;-webkit-text-stroke:0.15px #2176d2;transform:scale(0.965,1.18);transform-origin:0 50%;">East Warehouse_23-25-27</div>
<div class="a" style="left:258.40px;top:441.10px;width:260.20px;height:1.00px;background:#e2e2e2;"></div>
<div class="t" style="left:262.70px;top:441.90px;width:255.90px;height:12.80px;line-height:12.80px;font-size:6.0px;font-weight:normal;color:#2176d2;text-align:left;-webkit-text-stroke:0.15px #2176d2;transform:scale(0.965,1.18);transform-origin:0 50%;">Cubicles_29</div>
<div class="a" style="left:258.40px;top:453.90px;width:260.20px;height:1.00px;background:#e2e2e2;"></div>
<div class="t" style="left:262.70px;top:454.70px;width:255.90px;height:12.80px;line-height:12.80px;font-size:6.0px;font-weight:normal;color:#2176d2;text-align:left;-webkit-text-stroke:0.15px #2176d2;transform:scale(0.965,1.18);transform-origin:0 50%;">Cubicles_31</div>
<div class="a" style="left:587.10px;top:261.90px;width:60.40px;height:1.00px;background:#e2e2e2;"></div>
<div class="t" style="left:587.10px;top:262.70px;width:30.40px;height:12.80px;line-height:12.80px;font-size:6.0px;font-weight:normal;color:#222;text-align:center;-webkit-text-stroke:0.2px #222;transform:scale(1,1.18);transform-origin:50% 50%;">50</div>
<div class="a" style="left:618.80px;top:264.30px;width:27.40px;height:9.00px;background:#bcbcbc;"></div>
<div class="a" style="left:618.80px;top:264.30px;width:0.80px;height:9.00px;background:#1e88d6;"></div>
<div class="t" style="left:618.80px;top:264.00px;width:27.40px;height:9.00px;line-height:9.00px;font-size:4.9px;font-weight:bold;color:#f6f6f6;text-align:center;transform:scale(1,1.1);transform-origin:50% 50%;">1%</div>
<div class="a" style="left:587.10px;top:274.70px;width:60.40px;height:1.00px;background:#e2e2e2;"></div>
<div class="t" style="left:587.10px;top:275.50px;width:30.40px;height:12.80px;line-height:12.80px;font-size:6.0px;font-weight:normal;color:#222;text-align:center;-webkit-text-stroke:0.2px #222;transform:scale(1,1.18);transform-origin:50% 50%;">50</div>
<div class="a" style="left:618.80px;top:277.10px;width:27.40px;height:9.00px;background:#bcbcbc;"></div>
<div class="a" style="left:618.80px;top:277.10px;width:0.80px;height:9.00px;background:#1e88d6;"></div>
<div class="t" style="left:618.80px;top:276.80px;width:27.40px;height:9.00px;line-height:9.00px;font-size:4.9px;font-weight:bold;color:#f6f6f6;text-align:center;transform:scale(1,1.1);transform-origin:50% 50%;">1%</div>
<div class="a" style="left:587.10px;top:287.50px;width:60.40px;height:1.00px;background:#e2e2e2;"></div>
<div class="t" style="left:587.10px;top:288.30px;width:30.40px;height:12.80px;line-height:12.80px;font-size:6.0px;font-weight:normal;color:#222;text-align:center;-webkit-text-stroke:0.2px #222;transform:scale(1,1.18);transform-origin:50% 50%;">50</div>
<div class="a" style="left:618.80px;top:289.90px;width:27.40px;height:9.00px;background:#bcbcbc;"></div>
<div class="a" style="left:618.80px;top:289.90px;width:0.80px;height:9.00px;background:#1e88d6;"></div>
<div class="t" style="left:618.80px;top:289.60px;width:27.40px;height:9.00px;line-height:9.00px;font-size:4.9px;font-weight:bold;color:#f6f6f6;text-align:center;transform:scale(1,1.1);transform-origin:50% 50%;">1%</div>
<div class="a" style="left:587.10px;top:300.30px;width:60.40px;height:1.00px;background:#e2e2e2;"></div>
<div class="t" style="left:587.10px;top:301.10px;width:30.40px;height:12.80px;line-height:12.80px;font-size:6.0px;font-weight:normal;color:#222;text-align:center;-webkit-text-stroke:0.2px #222;transform:scale(1,1.18);transform-origin:50% 50%;">60</div>
<div class="a" style="left:618.80px;top:302.70px;width:27.40px;height:9.00px;background:#bcbcbc;"></div>
<div class="t" style="left:618.80px;top:302.40px;width:27.40px;height:9.00px;line-height:9.00px;font-size:4.9px;font-weight:bold;color:#f6f6f6;text-align:center;transform:scale(1,1.1);transform-origin:50% 50%;">0%</div>
<div class="a" style="left:587.10px;top:313.10px;width:60.40px;height:1.00px;background:#e2e2e2;"></div>
<div class="t" style="left:587.10px;top:313.90px;width:30.40px;height:12.80px;line-height:12.80px;font-size:6.0px;font-weight:normal;color:#222;text-align:center;-webkit-text-stroke:0.2px #222;transform:scale(1,1.18);transform-origin:50% 50%;">60</div>
<div class="a" style="left:618.80px;top:315.50px;width:27.40px;height:9.00px;background:#bcbcbc;"></div>
<div class="t" style="left:618.80px;top:315.20px;width:27.40px;height:9.00px;line-height:9.00px;font-size:4.9px;font-weight:bold;color:#f6f6f6;text-align:center;transform:scale(1,1.1);transform-origin:50% 50%;">0%</div>
<div class="a" style="left:587.10px;top:325.90px;width:60.40px;height:1.00px;background:#e2e2e2;"></div>
<div class="t" style="left:587.10px;top:326.70px;width:30.40px;height:12.80px;line-height:12.80px;font-size:6.0px;font-weight:normal;color:#222;text-align:center;-webkit-text-stroke:0.2px #222;transform:scale(1,1.18);transform-origin:50% 50%;">60</div>
<div class="a" style="left:618.80px;top:328.30px;width:27.40px;height:9.00px;background:#bcbcbc;"></div>
<div class="t" style="left:618.80px;top:328.00px;width:27.40px;height:9.00px;line-height:9.00px;font-size:4.9px;font-weight:bold;color:#f6f6f6;text-align:center;transform:scale(1,1.1);transform-origin:50% 50%;">0%</div>
<div class="a" style="left:587.10px;top:338.70px;width:60.40px;height:1.00px;background:#e2e2e2;"></div>
<div class="t" style="left:587.10px;top:339.50px;width:30.40px;height:12.80px;line-height:12.80px;font-size:6.0px;font-weight:normal;color:#222;text-align:center;-webkit-text-stroke:0.2px #222;transform:scale(1,1.18);transform-origin:50% 50%;">20</div>
<div class="a" style="left:618.80px;top:341.10px;width:27.40px;height:9.00px;background:#bcbcbc;"></div>
<div class="a" style="left:618.80px;top:341.10px;width:0.80px;height:9.00px;background:#1e88d6;"></div>
<div class="t" style="left:618.80px;top:340.80px;width:27.40px;height:9.00px;line-height:9.00px;font-size:4.9px;font-weight:bold;color:#f6f6f6;text-align:center;transform:scale(1,1.1);transform-origin:50% 50%;">2%</div>
<div class="a" style="left:587.10px;top:351.50px;width:60.40px;height:1.00px;background:#e2e2e2;"></div>
<div class="t" style="left:587.10px;top:352.30px;width:30.40px;height:12.80px;line-height:12.80px;font-size:6.0px;font-weight:normal;color:#222;text-align:center;-webkit-text-stroke:0.2px #222;transform:scale(1,1.18);transform-origin:50% 50%;">20</div>
<div class="a" style="left:618.80px;top:353.90px;width:27.40px;height:9.00px;background:#bcbcbc;"></div>
<div class="a" style="left:618.80px;top:353.90px;width:5.75px;height:9.00px;background:#1e88d6;"></div>
<div class="t" style="left:618.80px;top:353.60px;width:27.40px;height:9.00px;line-height:9.00px;font-size:4.9px;font-weight:bold;color:#f6f6f6;text-align:center;transform:scale(1,1.1);transform-origin:50% 50%;">21%</div>
<div class="a" style="left:587.10px;top:364.30px;width:60.40px;height:1.00px;background:#e2e2e2;"></div>
<div class="t" style="left:587.10px;top:365.10px;width:30.40px;height:12.80px;line-height:12.80px;font-size:6.0px;font-weight:normal;color:#222;text-align:center;-webkit-text-stroke:0.2px #222;transform:scale(1,1.18);transform-origin:50% 50%;">30</div>
<div class="a" style="left:618.80px;top:366.70px;width:27.40px;height:9.00px;background:#bcbcbc;"></div>
<div class="a" style="left:618.80px;top:366.70px;width:0.80px;height:9.00px;background:#1e88d6;"></div>
<div class="t" style="left:618.80px;top:366.40px;width:27.40px;height:9.00px;line-height:9.00px;font-size:4.9px;font-weight:bold;color:#f6f6f6;text-align:center;transform:scale(1,1.1);transform-origin:50% 50%;">1%</div>
<div class="a" style="left:587.10px;top:377.10px;width:60.40px;height:1.00px;background:#e2e2e2;"></div>
<div class="t" style="left:587.10px;top:377.90px;width:30.40px;height:12.80px;line-height:12.80px;font-size:6.0px;font-weight:normal;color:#222;text-align:center;-webkit-text-stroke:0.2px #222;transform:scale(1,1.18);transform-origin:50% 50%;">30</div>
<div class="a" style="left:618.80px;top:379.50px;width:27.40px;height:9.00px;background:#bcbcbc;"></div>
<div class="t" style="left:618.80px;top:379.20px;width:27.40px;height:9.00px;line-height:9.00px;font-size:4.9px;font-weight:bold;color:#f6f6f6;text-align:center;transform:scale(1,1.1);transform-origin:50% 50%;">0%</div>
<div class="a" style="left:587.10px;top:389.90px;width:60.40px;height:1.00px;background:#e2e2e2;"></div>
<div class="t" style="left:587.10px;top:390.70px;width:30.40px;height:12.80px;line-height:12.80px;font-size:6.0px;font-weight:normal;color:#222;text-align:center;-webkit-text-stroke:0.2px #222;transform:scale(1,1.18);transform-origin:50% 50%;">30</div>
<div class="a" style="left:618.80px;top:392.30px;width:27.40px;height:9.00px;background:#bcbcbc;"></div>
<div class="t" style="left:618.80px;top:392.00px;width:27.40px;height:9.00px;line-height:9.00px;font-size:4.9px;font-weight:bold;color:#f6f6f6;text-align:center;transform:scale(1,1.1);transform-origin:50% 50%;">0%</div>
<div class="a" style="left:587.10px;top:402.70px;width:60.40px;height:1.00px;background:#e2e2e2;"></div>
<div class="t" style="left:587.10px;top:403.50px;width:30.40px;height:12.80px;line-height:12.80px;font-size:6.0px;font-weight:normal;color:#222;text-align:center;-webkit-text-stroke:0.2px #222;transform:scale(1,1.18);transform-origin:50% 50%;">30</div>
<div class="a" style="left:618.80px;top:405.10px;width:27.40px;height:9.00px;background:#bcbcbc;"></div>
<div class="t" style="left:618.80px;top:404.80px;width:27.40px;height:9.00px;line-height:9.00px;font-size:4.9px;font-weight:bold;color:#f6f6f6;text-align:center;transform:scale(1,1.1);transform-origin:50% 50%;">0%</div>
<div class="a" style="left:587.10px;top:415.50px;width:60.40px;height:1.00px;background:#e2e2e2;"></div>
<div class="t" style="left:587.10px;top:416.30px;width:30.40px;height:12.80px;line-height:12.80px;font-size:6.0px;font-weight:normal;color:#222;text-align:center;-webkit-text-stroke:0.2px #222;transform:scale(1,1.18);transform-origin:50% 50%;">30</div>
<div class="a" style="left:618.80px;top:417.90px;width:27.40px;height:9.00px;background:#bcbcbc;"></div>
<div class="t" style="left:618.80px;top:417.60px;width:27.40px;height:9.00px;line-height:9.00px;font-size:4.9px;font-weight:bold;color:#f6f6f6;text-align:center;transform:scale(1,1.1);transform-origin:50% 50%;">0%</div>
<div class="a" style="left:587.10px;top:428.30px;width:60.40px;height:1.00px;background:#e2e2e2;"></div>
<div class="t" style="left:587.10px;top:429.10px;width:30.40px;height:12.80px;line-height:12.80px;font-size:6.0px;font-weight:normal;color:#222;text-align:center;-webkit-text-stroke:0.2px #222;transform:scale(1,1.18);transform-origin:50% 50%;">30</div>
<div class="a" style="left:618.80px;top:430.70px;width:27.40px;height:9.00px;background:#bcbcbc;"></div>
<div class="t" style="left:618.80px;top:430.40px;width:27.40px;height:9.00px;line-height:9.00px;font-size:4.9px;font-weight:bold;color:#f6f6f6;text-align:center;transform:scale(1,1.1);transform-origin:50% 50%;">0%</div>
<div class="a" style="left:587.10px;top:441.10px;width:60.40px;height:1.00px;background:#e2e2e2;"></div>
<div class="t" style="left:587.10px;top:441.90px;width:30.40px;height:12.80px;line-height:12.80px;font-size:6.0px;font-weight:normal;color:#222;text-align:center;-webkit-text-stroke:0.2px #222;transform:scale(1,1.18);transform-origin:50% 50%;">20</div>
<div class="a" style="left:618.80px;top:443.50px;width:27.40px;height:9.00px;background:#bcbcbc;"></div>
<div class="a" style="left:618.80px;top:443.50px;width:3.29px;height:9.00px;background:#1e88d6;"></div>
<div class="t" style="left:618.80px;top:443.20px;width:27.40px;height:9.00px;line-height:9.00px;font-size:4.9px;font-weight:bold;color:#f6f6f6;text-align:center;transform:scale(1,1.1);transform-origin:50% 50%;">12%</div>
<div class="a" style="left:587.10px;top:453.90px;width:60.40px;height:1.00px;background:#e2e2e2;"></div>
<div class="t" style="left:587.10px;top:454.70px;width:30.40px;height:12.80px;line-height:12.80px;font-size:6.0px;font-weight:normal;color:#222;text-align:center;-webkit-text-stroke:0.2px #222;transform:scale(1,1.18);transform-origin:50% 50%;">20</div>
<div class="a" style="left:618.80px;top:456.30px;width:27.40px;height:9.00px;background:#bcbcbc;"></div>
<div class="t" style="left:618.80px;top:456.00px;width:27.40px;height:9.00px;line-height:9.00px;font-size:4.9px;font-weight:bold;color:#f6f6f6;text-align:center;transform:scale(1,1.1);transform-origin:50% 50%;">0%</div>
<div class="a" style="left:617.00px;top:262.40px;width:1.00px;height:198.60px;background:#e2e2e2;"></div>
<div class="a" style="left:651.70px;top:261.90px;width:29.50px;height:1.00px;background:#e2e2e2;"></div>
<div class="a" style="left:653.00px;top:264.30px;width:26.90px;height:9.00px;background:#bcbcbc;"></div>
<div class="a" style="left:653.00px;top:264.30px;width:0.81px;height:9.00px;background:#1e88d6;"></div>
<div class="t" style="left:653.00px;top:264.00px;width:26.90px;height:9.00px;line-height:9.00px;font-size:4.9px;font-weight:bold;color:#f6f6f6;text-align:center;transform:scale(1,1.1);transform-origin:50% 50%;">3%</div>
<div class="a" style="left:651.70px;top:274.70px;width:29.50px;height:1.00px;background:#e2e2e2;"></div>
<div class="a" style="left:653.00px;top:277.10px;width:26.90px;height:9.00px;background:#bcbcbc;"></div>
<div class="a" style="left:653.00px;top:277.10px;width:2.15px;height:9.00px;background:#1e88d6;"></div>
<div class="t" style="left:653.00px;top:276.80px;width:26.90px;height:9.00px;line-height:9.00px;font-size:4.9px;font-weight:bold;color:#f6f6f6;text-align:center;transform:scale(1,1.1);transform-origin:50% 50%;">8%</div>
<div class="a" style="left:651.70px;top:287.50px;width:29.50px;height:1.00px;background:#e2e2e2;"></div>
<div class="a" style="left:653.00px;top:289.90px;width:26.90px;height:9.00px;background:#bcbcbc;"></div>
<div class="t" style="left:653.00px;top:289.60px;width:26.90px;height:9.00px;line-height:9.00px;font-size:4.9px;font-weight:bold;color:#f6f6f6;text-align:center;transform:scale(1,1.1);transform-origin:50% 50%;">0%</div>
<div class="a" style="left:651.70px;top:300.30px;width:29.50px;height:1.00px;background:#e2e2e2;"></div>
<div class="a" style="left:653.00px;top:302.70px;width:26.90px;height:9.00px;background:#bcbcbc;"></div>
<div class="t" style="left:653.00px;top:302.40px;width:26.90px;height:9.00px;line-height:9.00px;font-size:4.9px;font-weight:bold;color:#f6f6f6;text-align:center;transform:scale(1,1.1);transform-origin:50% 50%;">0%</div>
<div class="a" style="left:651.70px;top:313.10px;width:29.50px;height:1.00px;background:#e2e2e2;"></div>
<div class="a" style="left:653.00px;top:315.50px;width:26.90px;height:9.00px;background:#bcbcbc;"></div>
<div class="t" style="left:653.00px;top:315.20px;width:26.90px;height:9.00px;line-height:9.00px;font-size:4.9px;font-weight:bold;color:#f6f6f6;text-align:center;transform:scale(1,1.1);transform-origin:50% 50%;">0%</div>
<div class="a" style="left:651.70px;top:325.90px;width:29.50px;height:1.00px;background:#e2e2e2;"></div>
<div class="a" style="left:653.00px;top:328.30px;width:26.90px;height:9.00px;background:#bcbcbc;"></div>
<div class="t" style="left:653.00px;top:328.00px;width:26.90px;height:9.00px;line-height:9.00px;font-size:4.9px;font-weight:bold;color:#f6f6f6;text-align:center;transform:scale(1,1.1);transform-origin:50% 50%;">0%</div>
<div class="a" style="left:651.70px;top:338.70px;width:29.50px;height:1.00px;background:#e2e2e2;"></div>
<div class="a" style="left:653.00px;top:341.10px;width:26.90px;height:9.00px;background:#bcbcbc;"></div>
<div class="t" style="left:653.00px;top:340.80px;width:26.90px;height:9.00px;line-height:9.00px;font-size:4.9px;font-weight:bold;color:#f6f6f6;text-align:center;transform:scale(1,1.1);transform-origin:50% 50%;">0%</div>
<div class="a" style="left:651.70px;top:351.50px;width:29.50px;height:1.00px;background:#e2e2e2;"></div>
<div class="a" style="left:653.00px;top:353.90px;width:26.90px;height:9.00px;background:#bcbcbc;"></div>
<div class="t" style="left:653.00px;top:353.60px;width:26.90px;height:9.00px;line-height:9.00px;font-size:4.9px;font-weight:bold;color:#f6f6f6;text-align:center;transform:scale(1,1.1);transform-origin:50% 50%;">0%</div>
<div class="a" style="left:651.70px;top:364.30px;width:29.50px;height:1.00px;background:#e2e2e2;"></div>
<div class="a" style="left:653.00px;top:366.70px;width:26.90px;height:9.00px;background:#bcbcbc;"></div>
<div class="t" style="left:653.00px;top:366.40px;width:26.90px;height:9.00px;line-height:9.00px;font-size:4.9px;font-weight:bold;color:#f6f6f6;text-align:center;transform:scale(1,1.1);transform-origin:50% 50%;">0%</div>
<div class="a" style="left:651.70px;top:377.10px;width:29.50px;height:1.00px;background:#e2e2e2;"></div>
<div class="a" style="left:653.00px;top:379.50px;width:26.90px;height:9.00px;background:#bcbcbc;"></div>
<div class="a" style="left:653.00px;top:379.50px;width:14.80px;height:9.00px;background:#1e88d6;"></div>
<div class="t" style="left:653.00px;top:379.20px;width:26.90px;height:9.00px;line-height:9.00px;font-size:4.9px;font-weight:bold;color:#f6f6f6;text-align:center;transform:scale(1,1.1);transform-origin:50% 50%;">55%</div>
<div class="a" style="left:651.70px;top:389.90px;width:29.50px;height:1.00px;background:#e2e2e2;"></div>
<div class="a" style="left:653.00px;top:392.30px;width:26.90px;height:9.00px;background:#bcbcbc;"></div>
<div class="t" style="left:653.00px;top:392.00px;width:26.90px;height:9.00px;line-height:9.00px;font-size:4.9px;font-weight:bold;color:#f6f6f6;text-align:center;transform:scale(1,1.1);transform-origin:50% 50%;">N/A</div>
<div class="a" style="left:651.70px;top:402.70px;width:29.50px;height:1.00px;background:#e2e2e2;"></div>
<div class="a" style="left:653.00px;top:405.10px;width:26.90px;height:9.00px;background:#bcbcbc;"></div>
<div class="t" style="left:653.00px;top:404.80px;width:26.90px;height:9.00px;line-height:9.00px;font-size:4.9px;font-weight:bold;color:#f6f6f6;text-align:center;transform:scale(1,1.1);transform-origin:50% 50%;">N/A</div>
<div class="a" style="left:651.70px;top:415.50px;width:29.50px;height:1.00px;background:#e2e2e2;"></div>
<div class="a" style="left:653.00px;top:424.30px;width:26.90px;height:9.00px;background:#bcbcbc;"></div>
<div class="t" style="left:653.00px;top:424.00px;width:26.90px;height:9.00px;line-height:9.00px;font-size:4.9px;font-weight:bold;color:#f6f6f6;text-align:center;transform:scale(1,1.1);transform-origin:50% 50%;">0%</div>
<div class="a" style="left:651.70px;top:441.10px;width:29.50px;height:1.00px;background:#e2e2e2;"></div>
<div class="a" style="left:653.00px;top:443.50px;width:26.90px;height:9.00px;background:#bcbcbc;"></div>
<div class="t" style="left:653.00px;top:443.20px;width:26.90px;height:9.00px;line-height:9.00px;font-size:4.9px;font-weight:bold;color:#f6f6f6;text-align:center;transform:scale(1,1.1);transform-origin:50% 50%;">0%</div>
<div class="a" style="left:651.70px;top:453.90px;width:29.50px;height:1.00px;background:#e2e2e2;"></div>
<div class="a" style="left:653.00px;top:456.30px;width:26.90px;height:9.00px;background:#bcbcbc;"></div>
<div class="a" style="left:653.00px;top:456.30px;width:16.68px;height:9.00px;background:#1e88d6;"></div>
<div class="t" style="left:653.00px;top:456.00px;width:26.90px;height:9.00px;line-height:9.00px;font-size:4.9px;font-weight:bold;color:#f6f6f6;text-align:center;transform:scale(1,1.1);transform-origin:50% 50%;">62%</div>
<div class="a" style="left:681.20px;top:261.90px;width:30.30px;height:1.00px;background:#e2e2e2;"></div>
<div class="t" style="left:681.20px;top:262.70px;width:30.30px;height:12.80px;line-height:12.80px;font-size:6.0px;font-weight:normal;color:#222;text-align:center;-webkit-text-stroke:0.2px #222;transform:scale(1,1.18);transform-origin:50% 50%;">20</div>
<div class="a" style="left:681.20px;top:274.70px;width:30.30px;height:1.00px;background:#e2e2e2;"></div>
<div class="t" style="left:681.20px;top:275.50px;width:30.30px;height:12.80px;line-height:12.80px;font-size:6.0px;font-weight:normal;color:#222;text-align:center;-webkit-text-stroke:0.2px #222;transform:scale(1,1.18);transform-origin:50% 50%;">20</div>
<div class="a" style="left:681.20px;top:287.50px;width:30.30px;height:1.00px;background:#e2e2e2;"></div>
<div class="t" style="left:681.20px;top:288.30px;width:30.30px;height:12.80px;line-height:12.80px;font-size:6.0px;font-weight:normal;color:#222;text-align:center;-webkit-text-stroke:0.2px #222;transform:scale(1,1.18);transform-origin:50% 50%;">20</div>
<div class="a" style="left:681.20px;top:300.30px;width:30.30px;height:1.00px;background:#e2e2e2;"></div>
<div class="t" style="left:681.20px;top:301.10px;width:30.30px;height:12.80px;line-height:12.80px;font-size:6.0px;font-weight:normal;color:#222;text-align:center;-webkit-text-stroke:0.2px #222;transform:scale(1,1.18);transform-origin:50% 50%;">20</div>
<div class="a" style="left:681.20px;top:313.10px;width:30.30px;height:1.00px;background:#e2e2e2;"></div>
<div class="t" style="left:681.20px;top:313.90px;width:30.30px;height:12.80px;line-height:12.80px;font-size:6.0px;font-weight:normal;color:#222;text-align:center;-webkit-text-stroke:0.2px #222;transform:scale(1,1.18);transform-origin:50% 50%;">20</div>
<div class="a" style="left:681.20px;top:325.90px;width:30.30px;height:1.00px;background:#e2e2e2;"></div>
<div class="t" style="left:681.20px;top:326.70px;width:30.30px;height:12.80px;line-height:12.80px;font-size:6.0px;font-weight:normal;color:#222;text-align:center;-webkit-text-stroke:0.2px #222;transform:scale(1,1.18);transform-origin:50% 50%;">20</div>
<div class="a" style="left:681.20px;top:338.70px;width:30.30px;height:1.00px;background:#e2e2e2;"></div>
<div class="t" style="left:681.20px;top:339.50px;width:30.30px;height:12.80px;line-height:12.80px;font-size:6.0px;font-weight:normal;color:#222;text-align:center;-webkit-text-stroke:0.2px #222;transform:scale(1,1.18);transform-origin:50% 50%;">60</div>
<div class="a" style="left:681.20px;top:351.50px;width:30.30px;height:1.00px;background:#e2e2e2;"></div>
<div class="t" style="left:681.20px;top:352.30px;width:30.30px;height:12.80px;line-height:12.80px;font-size:6.0px;font-weight:normal;color:#222;text-align:center;-webkit-text-stroke:0.2px #222;transform:scale(1,1.18);transform-origin:50% 50%;">60</div>
<div class="a" style="left:681.20px;top:364.30px;width:30.30px;height:1.00px;background:#e2e2e2;"></div>
<div class="t" style="left:681.20px;top:365.10px;width:30.30px;height:12.80px;line-height:12.80px;font-size:6.0px;font-weight:normal;color:#222;text-align:center;-webkit-text-stroke:0.2px #222;transform:scale(1,1.18);transform-origin:50% 50%;">60</div>
<div class="a" style="left:681.20px;top:377.10px;width:30.30px;height:1.00px;background:#e2e2e2;"></div>
<div class="t" style="left:681.20px;top:377.90px;width:30.30px;height:12.80px;line-height:12.80px;font-size:6.0px;font-weight:normal;color:#222;text-align:center;-webkit-text-stroke:0.2px #222;transform:scale(1,1.18);transform-origin:50% 50%;">20</div>
<div class="a" style="left:681.20px;top:389.90px;width:30.30px;height:1.00px;background:#e2e2e2;"></div>
<div class="t" style="left:681.20px;top:390.70px;width:30.30px;height:12.80px;line-height:12.80px;font-size:6.0px;font-weight:normal;color:#222;text-align:center;-webkit-text-stroke:0.2px #222;transform:scale(1,1.18);transform-origin:50% 50%;">--</div>
<div class="a" style="left:681.20px;top:402.70px;width:30.30px;height:1.00px;background:#e2e2e2;"></div>
<div class="t" style="left:681.20px;top:403.50px;width:30.30px;height:12.80px;line-height:12.80px;font-size:6.0px;font-weight:normal;color:#222;text-align:center;-webkit-text-stroke:0.2px #222;transform:scale(1,1.18);transform-origin:50% 50%;">--</div>
<div class="a" style="left:681.20px;top:415.50px;width:30.30px;height:1.00px;background:#e2e2e2;"></div>
<div class="t" style="left:681.20px;top:416.30px;width:30.30px;height:12.80px;line-height:12.80px;font-size:6.0px;font-weight:normal;color:#222;text-align:center;-webkit-text-stroke:0.2px #222;transform:scale(1,1.18);transform-origin:50% 50%;">20</div>
<div class="a" style="left:681.20px;top:428.30px;width:30.30px;height:1.00px;background:#e2e2e2;"></div>
<div class="t" style="left:681.20px;top:429.10px;width:30.30px;height:12.80px;line-height:12.80px;font-size:6.0px;font-weight:normal;color:#222;text-align:center;-webkit-text-stroke:0.2px #222;transform:scale(1,1.18);transform-origin:50% 50%;">20</div>
<div class="a" style="left:681.20px;top:441.10px;width:30.30px;height:1.00px;background:#e2e2e2;"></div>
<div class="t" style="left:681.20px;top:441.90px;width:30.30px;height:12.80px;line-height:12.80px;font-size:6.0px;font-weight:normal;color:#222;text-align:center;-webkit-text-stroke:0.2px #222;transform:scale(1,1.18);transform-origin:50% 50%;">20</div>
<div class="a" style="left:681.20px;top:453.90px;width:30.30px;height:1.00px;background:#e2e2e2;"></div>
<div class="t" style="left:681.20px;top:454.70px;width:30.30px;height:12.80px;line-height:12.80px;font-size:6.0px;font-weight:normal;color:#222;text-align:center;-webkit-text-stroke:0.2px #222;transform:scale(1,1.18);transform-origin:50% 50%;">20</div>
<div class="a" style="left:680.70px;top:262.40px;width:1.00px;height:198.60px;background:#e2e2e2;"></div>
<div class="a" style="left:711.50px;top:262.40px;width:35.20px;height:12.80px;background:#fafcf1;"></div>
<div class="a" style="left:711.50px;top:261.90px;width:35.20px;height:1.00px;background:#d7ebcb;"></div>
<div class="t" style="left:711.50px;top:262.70px;width:35.20px;height:12.80px;line-height:12.80px;font-size:6.0px;font-weight:normal;color:#222;text-align:center;-webkit-text-stroke:0.2px #222;transform:scale(1,1.18);transform-origin:50% 50%;">700 mA</div>
<div class="a" style="left:711.50px;top:275.20px;width:35.20px;height:12.80px;background:#fafcf1;"></div>
<div class="a" style="left:711.50px;top:274.70px;width:35.20px;height:1.00px;background:#d7ebcb;"></div>
<div class="t" style="left:711.50px;top:275.50px;width:35.20px;height:12.80px;line-height:12.80px;font-size:6.0px;font-weight:normal;color:#222;text-align:center;-webkit-text-stroke:0.2px #222;transform:scale(1,1.18);transform-origin:50% 50%;">1.6 A</div>
<div class="a" style="left:711.50px;top:288.00px;width:35.20px;height:12.80px;background:#fafcf1;"></div>
<div class="a" style="left:711.50px;top:287.50px;width:35.20px;height:1.00px;background:#d7ebcb;"></div>
<div class="t" style="left:711.50px;top:288.30px;width:35.20px;height:12.80px;line-height:12.80px;font-size:6.0px;font-weight:normal;color:#222;text-align:center;-webkit-text-stroke:0.2px #222;transform:scale(1,1.18);transform-origin:50% 50%;">0.0 A</div>
<div class="a" style="left:711.50px;top:300.80px;width:35.20px;height:12.80px;background:#fafcf1;"></div>
<div class="a" style="left:711.50px;top:300.30px;width:35.20px;height:1.00px;background:#d7ebcb;"></div>
<div class="t" style="left:711.50px;top:301.10px;width:35.20px;height:12.80px;line-height:12.80px;font-size:6.0px;font-weight:normal;color:#222;text-align:center;-webkit-text-stroke:0.2px #222;transform:scale(1,1.18);transform-origin:50% 50%;">0.0 A</div>
<div class="a" style="left:711.50px;top:313.60px;width:35.20px;height:12.80px;background:#fafcf1;"></div>
<div class="a" style="left:711.50px;top:313.10px;width:35.20px;height:1.00px;background:#d7ebcb;"></div>
<div class="t" style="left:711.50px;top:313.90px;width:35.20px;height:12.80px;line-height:12.80px;font-size:6.0px;font-weight:normal;color:#222;text-align:center;-webkit-text-stroke:0.2px #222;transform:scale(1,1.18);transform-origin:50% 50%;">0.0 A</div>
<div class="a" style="left:711.50px;top:326.40px;width:35.20px;height:12.80px;background:#fafcf1;"></div>
<div class="a" style="left:711.50px;top:325.90px;width:35.20px;height:1.00px;background:#d7ebcb;"></div>
<div class="t" style="left:711.50px;top:326.70px;width:35.20px;height:12.80px;line-height:12.80px;font-size:6.0px;font-weight:normal;color:#222;text-align:center;-webkit-text-stroke:0.2px #222;transform:scale(1,1.18);transform-origin:50% 50%;">0.0 A</div>
<div class="a" style="left:711.50px;top:339.20px;width:35.20px;height:12.80px;background:#fafcf1;"></div>
<div class="a" style="left:711.50px;top:338.70px;width:35.20px;height:1.00px;background:#d7ebcb;"></div>
<div class="t" style="left:711.50px;top:339.50px;width:35.20px;height:12.80px;line-height:12.80px;font-size:6.0px;font-weight:normal;color:#222;text-align:center;-webkit-text-stroke:0.2px #222;transform:scale(1,1.18);transform-origin:50% 50%;">--</div>
<div class="a" style="left:711.50px;top:352.00px;width:35.20px;height:12.80px;background:#fafcf1;"></div>
<div class="a" style="left:711.50px;top:351.50px;width:35.20px;height:1.00px;background:#d7ebcb;"></div>
<div class="t" style="left:711.50px;top:352.30px;width:35.20px;height:12.80px;line-height:12.80px;font-size:6.0px;font-weight:normal;color:#222;text-align:center;-webkit-text-stroke:0.2px #222;transform:scale(1,1.18);transform-origin:50% 50%;">--</div>
<div class="a" style="left:711.50px;top:364.80px;width:35.20px;height:12.80px;background:#fafcf1;"></div>
<div class="a" style="left:711.50px;top:364.30px;width:35.20px;height:1.00px;background:#d7ebcb;"></div>
<div class="t" style="left:711.50px;top:365.10px;width:35.20px;height:12.80px;line-height:12.80px;font-size:6.0px;font-weight:normal;color:#222;text-align:center;-webkit-text-stroke:0.2px #222;transform:scale(1,1.18);transform-origin:50% 50%;">--</div>
<div class="a" style="left:711.50px;top:377.60px;width:35.20px;height:12.80px;background:#fafcf1;"></div>
<div class="a" style="left:711.50px;top:377.10px;width:35.20px;height:1.00px;background:#d7ebcb;"></div>
<div class="t" style="left:711.50px;top:377.90px;width:35.20px;height:12.80px;line-height:12.80px;font-size:6.0px;font-weight:normal;color:#222;text-align:center;-webkit-text-stroke:0.2px #222;transform:scale(1,1.18);transform-origin:50% 50%;">11.0 A</div>
<div class="a" style="left:711.50px;top:390.40px;width:35.20px;height:12.80px;background:#fafcf1;"></div>
<div class="a" style="left:711.50px;top:389.90px;width:35.20px;height:1.00px;background:#d7ebcb;"></div>
<div class="t" style="left:711.50px;top:390.70px;width:35.20px;height:12.80px;line-height:12.80px;font-size:6.0px;font-weight:normal;color:#222;text-align:center;-webkit-text-stroke:0.2px #222;transform:scale(1,1.18);transform-origin:50% 50%;">13.9 A</div>
<div class="a" style="left:711.50px;top:403.20px;width:35.20px;height:12.80px;background:#fafcf1;"></div>
<div class="a" style="left:711.50px;top:402.70px;width:35.20px;height:1.00px;background:#d7ebcb;"></div>
<div class="t" style="left:711.50px;top:403.50px;width:35.20px;height:12.80px;line-height:12.80px;font-size:6.0px;font-weight:normal;color:#222;text-align:center;-webkit-text-stroke:0.2px #222;transform:scale(1,1.18);transform-origin:50% 50%;">0.0 A</div>
<div class="a" style="left:711.50px;top:416.00px;width:35.20px;height:25.60px;background:#fafcf1;"></div>
<div class="a" style="left:711.50px;top:415.50px;width:35.20px;height:1.00px;background:#d7ebcb;"></div>
<div class="t" style="left:711.50px;top:416.30px;width:35.20px;height:25.60px;line-height:25.60px;font-size:6.0px;font-weight:normal;color:#222;text-align:center;-webkit-text-stroke:0.2px #222;transform:scale(1,1.18);transform-origin:50% 50%;">0.0 A</div>
<div class="a" style="left:711.50px;top:441.60px;width:35.20px;height:12.80px;background:#fafcf1;"></div>
<div class="a" style="left:711.50px;top:441.10px;width:35.20px;height:1.00px;background:#d7ebcb;"></div>
<div class="t" style="left:711.50px;top:441.90px;width:35.20px;height:12.80px;line-height:12.80px;font-size:6.0px;font-weight:normal;color:#222;text-align:center;-webkit-text-stroke:0.2px #222;transform:scale(1,1.18);transform-origin:50% 50%;">0.0 A</div>
<div class="a" style="left:711.50px;top:454.40px;width:35.20px;height:12.80px;background:#fafcf1;"></div>
<div class="a" style="left:711.50px;top:453.90px;width:35.20px;height:1.00px;background:#d7ebcb;"></div>
<div class="t" style="left:711.50px;top:454.70px;width:35.20px;height:12.80px;line-height:12.80px;font-size:6.0px;font-weight:normal;color:#222;text-align:center;-webkit-text-stroke:0.2px #222;transform:scale(1,1.18);transform-origin:50% 50%;">12.4 A</div>
<div class="a" style="left:746.70px;top:262.40px;width:34.00px;height:12.80px;background:#fafcf1;"></div>
<div class="a" style="left:746.70px;top:261.90px;width:34.00px;height:1.00px;background:#d7ebcb;"></div>
<div class="t" style="left:746.70px;top:262.70px;width:34.00px;height:12.80px;line-height:12.80px;font-size:6.0px;font-weight:normal;color:#222;text-align:center;-webkit-text-stroke:0.2px #222;transform:scale(1,1.18);transform-origin:50% 50%;">56.4 W</div>
<div class="a" style="left:746.70px;top:275.20px;width:34.00px;height:12.80px;background:#fafcf1;"></div>
<div class="a" style="left:746.70px;top:274.70px;width:34.00px;height:1.00px;background:#d7ebcb;"></div>
<div class="t" style="left:746.70px;top:275.50px;width:34.00px;height:12.80px;line-height:12.80px;font-size:6.0px;font-weight:normal;color:#222;text-align:center;-webkit-text-stroke:0.2px #222;transform:scale(1,1.18);transform-origin:50% 50%;">161.2 W</div>
<div class="a" style="left:746.70px;top:288.00px;width:34.00px;height:12.80px;background:#fafcf1;"></div>
<div class="a" style="left:746.70px;top:287.50px;width:34.00px;height:1.00px;background:#d7ebcb;"></div>
<div class="t" style="left:746.70px;top:288.30px;width:34.00px;height:12.80px;line-height:12.80px;font-size:6.0px;font-weight:normal;color:#222;text-align:center;-webkit-text-stroke:0.2px #222;transform:scale(1,1.18);transform-origin:50% 50%;">0.0 W</div>
<div class="a" style="left:746.70px;top:300.80px;width:34.00px;height:12.80px;background:#fafcf1;"></div>
<div class="a" style="left:746.70px;top:300.30px;width:34.00px;height:1.00px;background:#d7ebcb;"></div>
<div class="t" style="left:746.70px;top:301.10px;width:34.00px;height:12.80px;line-height:12.80px;font-size:6.0px;font-weight:normal;color:#222;text-align:center;-webkit-text-stroke:0.2px #222;transform:scale(1,1.18);transform-origin:50% 50%;">0.0 W</div>
<div class="a" style="left:746.70px;top:313.60px;width:34.00px;height:12.80px;background:#fafcf1;"></div>
<div class="a" style="left:746.70px;top:313.10px;width:34.00px;height:1.00px;background:#d7ebcb;"></div>
<div class="t" style="left:746.70px;top:313.90px;width:34.00px;height:12.80px;line-height:12.80px;font-size:6.0px;font-weight:normal;color:#222;text-align:center;-webkit-text-stroke:0.2px #222;transform:scale(1,1.18);transform-origin:50% 50%;">0.0 W</div>
<div class="a" style="left:746.70px;top:326.40px;width:34.00px;height:12.80px;background:#fafcf1;"></div>
<div class="a" style="left:746.70px;top:325.90px;width:34.00px;height:1.00px;background:#d7ebcb;"></div>
<div class="t" style="left:746.70px;top:326.70px;width:34.00px;height:12.80px;line-height:12.80px;font-size:6.0px;font-weight:normal;color:#222;text-align:center;-webkit-text-stroke:0.2px #222;transform:scale(1,1.18);transform-origin:50% 50%;">0.0 W</div>
<div class="a" style="left:746.70px;top:339.20px;width:34.00px;height:38.40px;background:#fafcf1;"></div>
<div class="a" style="left:746.70px;top:338.70px;width:34.00px;height:1.00px;background:#d7ebcb;"></div>
<div class="t" style="left:746.70px;top:339.50px;width:34.00px;height:38.40px;line-height:38.40px;font-size:6.0px;font-weight:normal;color:#222;text-align:center;-webkit-text-stroke:0.2px #222;transform:scale(1,1.18);transform-origin:50% 50%;">--</div>
<div class="a" style="left:746.70px;top:377.60px;width:34.00px;height:12.80px;background:#fafcf1;"></div>
<div class="a" style="left:746.70px;top:377.10px;width:34.00px;height:1.00px;background:#d7ebcb;"></div>
<div class="t" style="left:746.70px;top:377.90px;width:34.00px;height:12.80px;line-height:12.80px;font-size:6.0px;font-weight:normal;color:#222;text-align:center;-webkit-text-stroke:0.2px #222;transform:scale(1,1.18);transform-origin:50% 50%;">1.308 kW</div>
<div class="a" style="left:746.70px;top:390.40px;width:34.00px;height:12.80px;background:#fafcf1;"></div>
<div class="a" style="left:746.70px;top:389.90px;width:34.00px;height:1.00px;background:#d7ebcb;"></div>
<div class="t" style="left:746.70px;top:390.70px;width:34.00px;height:12.80px;line-height:12.80px;font-size:6.0px;font-weight:normal;color:#222;text-align:center;-webkit-text-stroke:0.2px #222;transform:scale(1,1.18);transform-origin:50% 50%;">1.677 kW</div>
<div class="a" style="left:746.70px;top:403.20px;width:34.00px;height:12.80px;background:#fafcf1;"></div>
<div class="a" style="left:746.70px;top:402.70px;width:34.00px;height:1.00px;background:#d7ebcb;"></div>
<div class="t" style="left:746.70px;top:403.50px;width:34.00px;height:12.80px;line-height:12.80px;font-size:6.0px;font-weight:normal;color:#222;text-align:center;-webkit-text-stroke:0.2px #222;transform:scale(1,1.18);transform-origin:50% 50%;">0.0 W</div>
<div class="a" style="left:746.70px;top:416.00px;width:34.00px;height:25.60px;background:#fafcf1;"></div>
<div class="a" style="left:746.70px;top:415.50px;width:34.00px;height:1.00px;background:#d7ebcb;"></div>
<div class="t" style="left:746.70px;top:416.30px;width:34.00px;height:25.60px;line-height:25.60px;font-size:6.0px;font-weight:normal;color:#222;text-align:center;-webkit-text-stroke:0.2px #222;transform:scale(1,1.18);transform-origin:50% 50%;">0.0 W</div>
<div class="a" style="left:746.70px;top:441.60px;width:34.00px;height:12.80px;background:#fafcf1;"></div>
<div class="a" style="left:746.70px;top:441.10px;width:34.00px;height:1.00px;background:#d7ebcb;"></div>
<div class="t" style="left:746.70px;top:441.90px;width:34.00px;height:12.80px;line-height:12.80px;font-size:6.0px;font-weight:normal;color:#222;text-align:center;-webkit-text-stroke:0.2px #222;transform:scale(1,1.18);transform-origin:50% 50%;">0.0 W</div>
<div class="a" style="left:746.70px;top:454.40px;width:34.00px;height:12.80px;background:#fafcf1;"></div>
<div class="a" style="left:746.70px;top:453.90px;width:34.00px;height:1.00px;background:#d7ebcb;"></div>
<div class="t" style="left:746.70px;top:454.70px;width:34.00px;height:12.80px;line-height:12.80px;font-size:6.0px;font-weight:normal;color:#222;text-align:center;-webkit-text-stroke:0.2px #222;transform:scale(1,1.18);transform-origin:50% 50%;">1.485 kW</div>
<div class="a" style="left:711.00px;top:262.40px;width:1.00px;height:198.60px;background:#d7ebcb;"></div>
<div class="a" style="left:746.20px;top:262.40px;width:1.00px;height:198.60px;background:#d7ebcb;"></div>
<div class="a" style="left:780.20px;top:262.40px;width:1.00px;height:198.60px;background:#d7ebcb;"></div>
<div class="a" style="left:780.70px;top:261.90px;width:260.60px;height:1.00px;background:#e2e2e2;"></div>
<div class="t" style="left:785.90px;top:262.70px;width:255.40px;height:12.80px;line-height:12.80px;font-size:6.0px;font-weight:normal;color:#2176d2;text-align:left;-webkit-text-stroke:0.15px #2176d2;transform:scale(0.965,1.18);transform-origin:0 50%;">NW Warehouse_2</div>
<div class="a" style="left:780.70px;top:274.70px;width:260.60px;height:1.00px;background:#e2e2e2;"></div>
<div class="t" style="left:785.90px;top:275.50px;width:255.40px;height:12.80px;line-height:12.80px;font-size:6.0px;font-weight:normal;color:#2176d2;text-align:left;-webkit-text-stroke:0.15px #2176d2;transform:scale(0.965,1.18);transform-origin:0 50%;">NE Warehouse_4</div>
<div class="a" style="left:780.70px;top:287.50px;width:260.60px;height:1.00px;background:#e2e2e2;"></div>
<div class="t" style="left:785.90px;top:288.30px;width:255.40px;height:12.80px;line-height:12.80px;font-size:6.0px;font-weight:normal;color:#2176d2;text-align:left;-webkit-text-stroke:0.15px #2176d2;transform:scale(0.965,1.18);transform-origin:0 50%;">Kitchen_6</div>
<div class="a" style="left:780.70px;top:300.30px;width:260.60px;height:1.00px;background:#e2e2e2;"></div>
<div class="t" style="left:785.90px;top:301.10px;width:255.40px;height:12.80px;line-height:12.80px;font-size:6.0px;font-weight:normal;color:#2176d2;text-align:left;-webkit-text-stroke:0.15px #2176d2;transform:scale(0.965,1.18);transform-origin:0 50%;">Kitchen_8</div>
<div class="a" style="left:780.70px;top:313.10px;width:260.60px;height:1.00px;background:#e2e2e2;"></div>
<div class="t" style="left:785.90px;top:313.90px;width:255.40px;height:12.80px;line-height:12.80px;font-size:6.0px;font-weight:normal;color:#2176d2;text-align:left;-webkit-text-stroke:0.15px #2176d2;transform:scale(0.965,1.18);transform-origin:0 50%;">Kitchen_10</div>
<div class="a" style="left:780.70px;top:325.90px;width:260.60px;height:1.00px;background:#e2e2e2;"></div>
<div class="t" style="left:785.90px;top:326.70px;width:255.40px;height:12.80px;line-height:12.80px;font-size:6.0px;font-weight:normal;color:#2176d2;text-align:left;-webkit-text-stroke:0.15px #2176d2;transform:scale(0.965,1.18);transform-origin:0 50%;">Kitchen_12</div>
<div class="a" style="left:780.70px;top:338.70px;width:260.60px;height:1.00px;background:#e2e2e2;"></div>
<div class="t" style="left:785.90px;top:339.50px;width:255.40px;height:38.40px;line-height:38.40px;font-size:6.0px;font-weight:normal;color:#2176d2;text-align:left;-webkit-text-stroke:0.15px #2176d2;transform:scale(0.965,1.18);transform-origin:0 50%;">RTU 3_14-16-18</div>
<div class="a" style="left:780.70px;top:377.10px;width:260.60px;height:1.00px;background:#e2e2e2;"></div>
<div class="t" style="left:785.90px;top:377.90px;width:255.40px;height:12.80px;line-height:12.80px;font-size:6.0px;font-weight:normal;color:#2176d2;text-align:left;-webkit-text-stroke:0.15px #2176d2;transform:scale(0.965,1.18);transform-origin:0 50%;">Warehouse Lites_20</div>
<div class="a" style="left:780.70px;top:389.90px;width:260.60px;height:1.00px;background:#e2e2e2;"></div>
<div class="t" style="left:785.90px;top:390.70px;width:255.40px;height:12.80px;line-height:12.80px;font-size:6.0px;font-weight:normal;color:#2176d2;text-align:left;-webkit-text-stroke:0.15px #2176d2;transform:scale(0.965,1.18);transform-origin:0 50%;">Open area lites_22</div>
<div class="a" style="left:780.70px;top:402.70px;width:260.60px;height:1.00px;background:#e2e2e2;"></div>
<div class="t" style="left:785.90px;top:403.50px;width:255.40px;height:12.80px;line-height:12.80px;font-size:6.0px;font-weight:normal;color:#2176d2;text-align:left;-webkit-text-stroke:0.15px #2176d2;transform:scale(0.965,1.18);transform-origin:0 50%;">Old H2O heater_24</div>
<div class="a" style="left:780.70px;top:415.50px;width:260.60px;height:1.00px;background:#e2e2e2;"></div>
<div class="t" style="left:785.90px;top:416.30px;width:255.40px;height:25.60px;line-height:25.60px;font-size:6.0px;font-weight:normal;color:#2176d2;text-align:left;-webkit-text-stroke:0.15px #2176d2;transform:scale(0.965,1.18);transform-origin:0 50%;">Timer Outside Lites_26-28</div>
<div class="a" style="left:780.70px;top:441.10px;width:260.60px;height:1.00px;background:#e2e2e2;"></div>
<div class="t" style="left:785.90px;top:441.90px;width:255.40px;height:12.80px;line-height:12.80px;font-size:6.0px;font-weight:normal;color:#2176d2;text-align:left;-webkit-text-stroke:0.15px #2176d2;transform:scale(0.965,1.18);transform-origin:0 50%;">Bath_30</div>
<div class="a" style="left:780.70px;top:453.90px;width:260.60px;height:1.00px;background:#e2e2e2;"></div>
<div class="t" style="left:785.90px;top:454.70px;width:255.40px;height:12.80px;line-height:12.80px;font-size:6.0px;font-weight:normal;color:#2176d2;text-align:left;-webkit-text-stroke:0.15px #2176d2;transform:scale(0.965,1.18);transform-origin:0 50%;">New H2O heater_32</div>
<div class="a" style="left:220.30px;top:236.10px;width:1.00px;height:224.90px;background:#d0d0d0;"></div>
<div class="a" style="left:1077.90px;top:236.10px;width:1.00px;height:224.90px;background:#d0d0d0;"></div>
<div class="a" style="left:220.80px;top:261.60px;width:426.70px;height:1.30px;background:#8fd34b;"></div>
<div class="a" style="left:651.70px;top:261.60px;width:426.70px;height:1.30px;background:#8fd34b;"></div>
<div class="a" style="left:78.00px;top:461.00px;width:1005.00px;height:3.00px;background:#e3e3e3;"></div>
<svg class="a" style="left:0;top:30px" width="110" height="80" viewBox="0 30 110 80">
<defs><filter id="sh" x="-20%" y="-50%" width="140%" height="250%"><feGaussianBlur stdDeviation="1.6"/></filter></defs>
<g fill="#777" opacity="0.55" filter="url(#sh)" transform="translate(1.2,3.2)">
<path d="M6.9 45.9 H67.4 V42 L79.3 48 L67.4 54 V50 H6.9 Z"/>
<path d="M30.8 92.9 H91.2 V89.2 L103.6 95 L91.2 100.9 V97 H30.8 Z"/>
</g>
<g fill="#00b04f">
<path d="M6.9 45.9 H67.4 V42 L79.3 48 L67.4 54 V50 H6.9 Z"/>
<path d="M30.8 92.9 H91.2 V89.2 L103.6 95 L91.2 100.9 V97 H30.8 Z"/>
</g></svg>
</body></html>
